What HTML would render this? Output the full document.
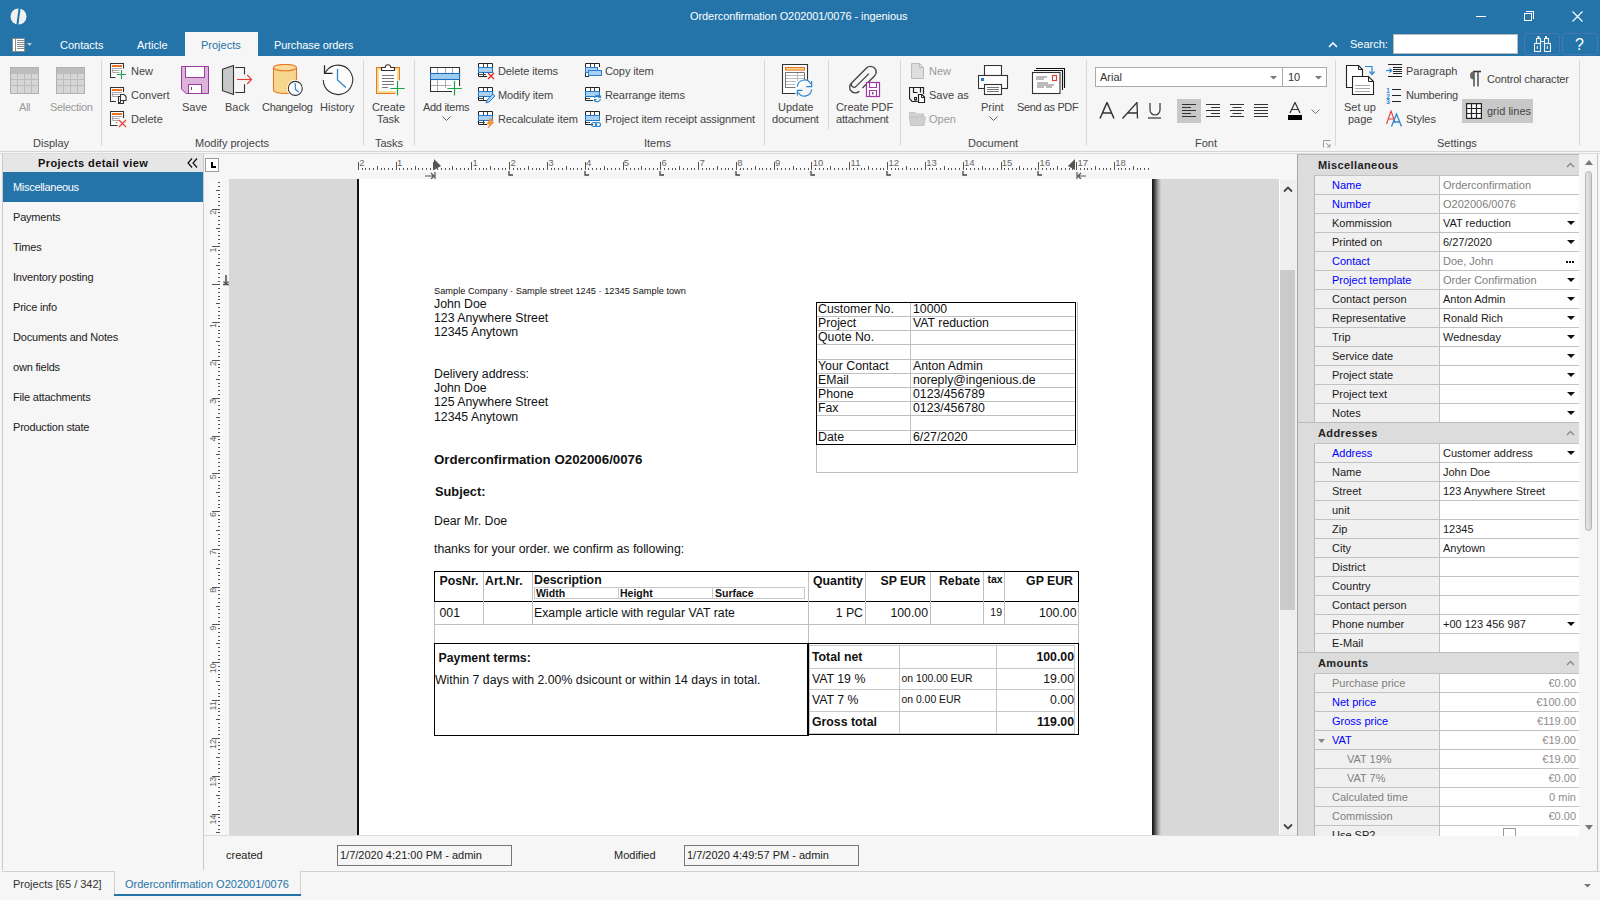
<!DOCTYPE html>
<html><head><meta charset="utf-8">
<style>
*{margin:0;padding:0;box-sizing:border-box}
html,body{width:1600px;height:900px;overflow:hidden;background:#f6f6f6;font-family:"Liberation Sans",sans-serif;font-size:11px;color:#222;position:relative}
.a{position:absolute;white-space:nowrap;line-height:1}
#title{left:0;top:0;width:1600px;height:56px;background:#2474a9}
.tt{color:#fff}
#ribbon{left:0;top:56px;width:1600px;height:95px;background:#f6f6f6}
.lbl{color:#444}
.sep{width:1px;background:#d9d9d9}
.gl{color:#444;font-size:11px}
.li{color:#222}
</style></head><body>
<div id="title" class="a">
  <svg class="a" style="left:10px;top:8px" width="17" height="17" viewBox="0 0 17 17"><circle cx="8.5" cy="8.5" r="8" fill="#f0f0f0"/><path d="M8.6 0 L10.6 0.3 L8.4 17 L6.4 16.7Z" fill="#2474a9"/></svg>
  <div class="a tt" style="left:690px;top:11px;font-size:11px;letter-spacing:-0.08px">Orderconfirmation O202001/0076 - ingenious</div>
  <div class="a" style="left:1476px;top:16px;width:10px;height:1px;background:#fff"></div>
  <div class="a" style="left:1526px;top:11px;width:8px;height:8px;border:1px solid #fff;border-bottom:none;border-left:none"></div>
  <div class="a" style="left:1524px;top:13px;width:8px;height:8px;border:1px solid #fff"></div>
  <svg class="a" style="left:1572px;top:11px" width="11" height="11" viewBox="0 0 11 11"><path d="M0.5 0.5L10.5 10.5M10.5 0.5L0.5 10.5" stroke="#fff" stroke-width="1.1"/></svg>
  <!-- menu icon -->
  <div class="a" style="left:12px;top:38px;width:13px;height:14px;border:1px solid #8a8a8a;background:#fff"></div>
  <div class="a" style="left:15px;top:39px;width:1px;height:12px;background:#8a8a8a"></div>
  <div class="a" style="left:17px;top:40px;width:7px;height:10px;background:repeating-linear-gradient(#8a8a8a 0 1px,#fff 1px 2px)"></div>
  <svg class="a" style="left:27px;top:43px" width="5" height="3"><path d="M0 0H5L2.5 3Z" fill="#c8c8c8"/></svg>
  <div class="a tt" style="left:60px;top:40px;font-size:11px">Contacts</div>
  <div class="a tt" style="left:137px;top:40px;font-size:11px">Article</div>
  <div class="a" style="left:185px;top:32px;width:73px;height:24px;background:#f6f6f6"></div>
  <div class="a" style="left:201px;top:40px;font-size:11px;color:#2474a9">Projects</div>
  <div class="a tt" style="left:274px;top:40px;font-size:11px;letter-spacing:-0.1px">Purchase orders</div>
  <svg class="a" style="left:1328px;top:41px" width="10" height="7"><path d="M1 6L5 2L9 6" stroke="#fff" stroke-width="1.6" fill="none"/></svg>
  <div class="a tt" style="left:1350px;top:39px;font-size:11px">Search:</div>
  <div class="a" style="left:1393px;top:34px;width:125px;height:20px;background:#fff;border:1px solid #b9b9b9"></div>
  <div class="a" style="left:1524px;top:33px;width:36px;height:22px;border:1px solid #4878b4;border-radius:3px"></div>
  <div class="a" style="left:1562px;top:33px;width:36px;height:22px;border:1px solid #4878b4;border-radius:3px"></div>
  <svg class="a" style="left:1534px;top:35px" width="17" height="18" viewBox="0 0 17 18"><g fill="none" stroke="#f4f0ea" stroke-width="1.1"><rect x="0.5" y="8.5" width="6" height="8"/><rect x="10.5" y="8.5" width="6" height="8"/><rect x="2.5" y="3.5" width="4" height="5"/><rect x="10.5" y="3.5" width="4" height="5"/><path d="M6 6.5H10.5M3.3 11V14M13.3 11V14"/></g><rect x="3.5" y="1" width="2" height="2" fill="#f4f0ea"/><rect x="11" y="1" width="2" height="2" fill="#f4f0ea"/></svg>
  <div class="a tt" style="left:1575px;top:37px;font-size:16px">?</div>
</div>

<div id="ribbon" class="a">
  <!-- separators -->
  <div class="a sep" style="left:101px;top:4px;height:86px"></div>
  <div class="a sep" style="left:363px;top:4px;height:86px"></div>
  <div class="a sep" style="left:414px;top:4px;height:86px"></div>
  <div class="a sep" style="left:764px;top:4px;height:86px"></div>
  <div class="a sep" style="left:828px;top:4px;height:70px"></div>
  <div class="a sep" style="left:900px;top:4px;height:86px"></div>
  <div class="a sep" style="left:1086px;top:4px;height:86px"></div>
  <div class="a sep" style="left:1335px;top:4px;height:86px"></div>
  <div class="a sep" style="left:1579px;top:4px;height:86px"></div>
  <!-- group labels -->
  <div class="a gl" style="left:33px;top:82px">Display</div>
  <div class="a gl" style="left:195px;top:82px">Modify projects</div>
  <div class="a gl" style="left:375px;top:82px">Tasks</div>
  <div class="a gl" style="left:644px;top:82px">Items</div>
  <div class="a gl" style="left:968px;top:82px">Document</div>
  <div class="a gl" style="left:1195px;top:82px">Font</div>
  <div class="a gl" style="left:1437px;top:82px">Settings</div>
  <svg class="a" style="left:1323px;top:84px" width="8" height="8"><path d="M0.5 7.5V0.5H7.5" stroke="#999" fill="none"/><path d="M3 3L7 7M7 4V7H4" stroke="#999" fill="none"/></svg>

  <!-- Display: All / Selection -->
  <svg class="a" style="left:10px;top:11px" width="29" height="27" viewBox="0 0 29 27"><rect x="0.5" y="0.5" width="28" height="26" fill="#d6d6d6" stroke="#b0b0b0"/><rect x="1" y="1" width="27" height="5" fill="#bdbdbd"/><path d="M1 6.5H28M1 12.5H28M1 18.5H28M7.5 6V26M14.5 6V26M21.5 6V26" stroke="#bcbcbc"/></svg>
  <svg class="a" style="left:56px;top:11px" width="29" height="27" viewBox="0 0 29 27"><rect x="0.5" y="0.5" width="28" height="26" fill="#d6d6d6" stroke="#b0b0b0"/><rect x="1" y="1" width="27" height="5" fill="#bdbdbd"/><path d="M1 6.5H28M1 12.5H28M1 18.5H28M7.5 6V26M14.5 6V26M21.5 6V26" stroke="#bcbcbc"/></svg>
  <div class="a lbl" style="left:19px;top:46px;color:#9a9a9a;font-size:11px;letter-spacing:-0.4px">All</div>
  <div class="a lbl" style="left:50px;top:46px;color:#9a9a9a;font-size:11px;letter-spacing:-0.3px">Selection</div>

  <!-- New / Convert / Delete -->
  <svg class="a" style="left:110px;top:7px" width="17" height="17" viewBox="0 0 17 17"><path d="M5.5 14.5H0.5V0.5H13.5V5.5" fill="#fff" stroke="#333" stroke-width="1.1"/><rect x="2" y="2" width="10" height="2" fill="#e8762a"/><path d="M2.5 5.5H12M2.5 5.5V9.5H9.5M2.5 7.5H9.5" fill="none" stroke="#aaa"/><path d="M11.5 7V16M7 11.5H16" stroke="#1aa34a" stroke-width="1.1"/></svg>
  <svg class="a" style="left:110px;top:31px" width="17" height="17" viewBox="0 0 17 17"><path d="M6 14.5H0.5V0.5H13.5V5" fill="#fff" stroke="#333" stroke-width="1.1"/><rect x="2" y="2" width="10" height="2" fill="#e8762a"/><path d="M2.5 5.5H12M2.5 5.5V9.5H9.5M2.5 7.5H9.5" fill="none" stroke="#aaa"/><path d="M8.5 9.5H10.5V15.5H8.5Z" fill="#fff" stroke="#333"/><path d="M10.5 7.5H14L16 9.5V13.5H10.5Z" fill="#fff" stroke="#333" stroke-width="1.1"/><path d="M8.5 9.5V16.5H13.5V13.5" fill="none" stroke="#333" stroke-width="1.1"/></svg>
  <svg class="a" style="left:110px;top:55px" width="17" height="17" viewBox="0 0 17 17"><path d="M7.5 14.5H0.5V0.5H13.5V7" fill="#fff" stroke="#333" stroke-width="1.1"/><rect x="2" y="2" width="10" height="2" fill="#e8762a"/><path d="M2.5 5.5H12M2.5 5.5V9.5H9.5M2.5 7.5H9.5" fill="none" stroke="#aaa"/><rect x="6" y="11" width="1.2" height="1.2" fill="#e8762a"/><path d="M9 9L16 16M16 9L9 16" stroke="#e53935" stroke-width="1.1"/></svg>
  <div class="a lbl" style="left:131px;top:10px;font-size:11px">New</div>
  <div class="a lbl" style="left:131px;top:34px;font-size:11px">Convert</div>
  <div class="a lbl" style="left:131px;top:58px;font-size:11px">Delete</div>

  <!-- Save -->
  <svg class="a" style="left:181px;top:10px" width="28" height="28" viewBox="0 0 28 28"><path d="M0.5 0.5H27.5V27.5H5L0.5 23Z" fill="#dcb3d9" stroke="#9b3aa3"/><rect x="4.5" y="0.5" width="19" height="11" fill="#fff" stroke="#9b3aa3"/><rect x="7.5" y="18.5" width="13" height="9" fill="#fff" stroke="#9b3aa3"/><path d="M10.5 21v3" stroke="#555"/></svg>
  <div class="a lbl" style="left:182px;top:46px;font-size:11px">Save</div>
  <!-- Back -->
  <svg class="a" style="left:221px;top:9px" width="32" height="31" viewBox="0 0 32 31"><path d="M1.5 4.3L12.5 0.5V29.5L1.5 25.7Z" fill="#c8c8c8" stroke="#333" stroke-width="1.1" stroke-linejoin="miter"/><path d="M14.2 2.5H23.5V9.4M23.5 19.2V27.5H14.2" fill="none" stroke="#333" stroke-width="1.1"/><path d="M16 14.5H30.5" stroke="#e53935" stroke-width="1.1"/><path d="M26.2 10L30.6 14.5L26.2 19" fill="none" stroke="#e53935" stroke-width="1.1"/></svg>
  <div class="a lbl" style="left:225px;top:46px;font-size:11px">Back</div>
  <!-- Changelog -->
  <svg class="a" style="left:272px;top:8px" width="33" height="33" viewBox="0 0 33 33"><path d="M1.5 3.6V26.2A11.5 3.3 0 0 0 24.5 26.2V3.6" fill="#f6d58c" stroke="#e8762a" stroke-width="1.1"/><ellipse cx="13" cy="3.6" rx="11.5" ry="3.2" fill="#f8dc9c" stroke="#e8762a" stroke-width="1.1"/><circle cx="23.3" cy="24.4" r="7.6" fill="#fff" stroke="#fff" stroke-width="1.5"/><circle cx="23.3" cy="24.4" r="7" fill="#fff" stroke="#333" stroke-width="1.1"/><path d="M23.3 19.3V25.2L26.8 28.2" fill="none" stroke="#2a85d0" stroke-width="1.2"/></svg>
  <div class="a lbl" style="left:262px;top:46px;font-size:11px;letter-spacing:-0.3px">Changelog</div>
  <!-- History -->
  <svg class="a" style="left:322px;top:8px" width="33" height="33" viewBox="0 0 33 33"><path d="M1.3 16A14.7 14.7 0 1 0 4.2 7.1L2.5 9.3" fill="#fdfdfd" stroke="#333" stroke-width="1.1"/><path d="M2.5 1.3V9.3H10.5" fill="none" stroke="#222" stroke-width="1.2"/><path d="M15.5 5V16L23.8 23.6" fill="none" stroke="#2a85d0" stroke-width="1.3"/></svg>
  <div class="a lbl" style="left:320px;top:46px;font-size:11px">History</div>

  <!-- Create Task -->
  <svg class="a" style="left:375px;top:8px" width="31" height="33" viewBox="0 0 31 33"><rect x="1.5" y="3.5" width="23" height="26" fill="#f6dc8c" stroke="#e8762a" stroke-width="1"/><rect x="4" y="6" width="18" height="21" fill="#fff"/><rect x="20.5" y="16.2" width="9" height="16" fill="#f6f6f6"/><rect x="20" y="16" width="2" height="11" fill="#fff"/><path d="M6.5 6.5V3.5H10.2A2.8 2.8 0 0 1 15.8 3.5H19.5V6.5Z" fill="#fff" stroke="#333" stroke-width="1.1"/><path d="M7 11.5H19M7 14.5H19M7 17.5H19M7 20.5H19M7 23.5H13" stroke="#777"/><path d="M22.5 17V31.5M15.3 24.5H29.7" stroke="#1aa34a" stroke-width="1.2"/></svg>
  <div class="a lbl" style="left:372px;top:46px;font-size:11px">Create</div>
  <div class="a lbl" style="left:377px;top:58px;font-size:11px">Task</div>
  <!-- Add items -->
  <svg class="a" style="left:430px;top:10px" width="33" height="31" viewBox="0 0 33 31"><path d="M22 25.5H0.5V1.5H29.5V20" fill="#fff" stroke="#333" stroke-width="1.1"/><path d="M7.5 2V7M15.5 2V7M22.5 2V7M7.5 14V25M15.5 14V22M1 19.5H21" stroke="#aaa"/><rect x="0.5" y="7.5" width="29" height="6" fill="#9fcdf0" stroke="#1e6fc0" stroke-width="1.1"/><rect x="17" y="14.2" width="12" height="5" fill="#fff"/><path d="M24.5 15V29.5M17.3 22.5H31.7" stroke="#1aa34a" stroke-width="1.2"/></svg>
  <div class="a lbl" style="left:423px;top:46px;font-size:11px;letter-spacing:-0.3px">Add items</div>
  <svg class="a" style="left:442px;top:60px" width="9" height="5"><path d="M0.5 0.5L4.5 4.5L8.5 0.5" stroke="#666" fill="none"/></svg>

  <!-- Items small -->
  <svg class="a" style="left:478px;top:7px" width="17" height="17" viewBox="0 0 17 17"><path d="M9 13.5H0.5V0.5H14.5V8" fill="#fff" stroke="#222"/><rect x="0.5" y="4.5" width="14" height="5" fill="#a9d1f3" stroke="#1e78cc"/><path d="M5.5 1V4M9.5 1V4M5.5 9V13M1 11.5H8" stroke="#444"/><path d="M10 10L16 16M16 10L10 16" stroke="#e02020" stroke-width="1.2"/></svg>
  <svg class="a" style="left:478px;top:31px" width="17" height="17" viewBox="0 0 17 17"><path d="M9 13.5H0.5V0.5H14.5V6" fill="#fff" stroke="#222"/><rect x="0.5" y="4.5" width="14" height="5" fill="#a9d1f3" stroke="#1e78cc"/><path d="M5.5 1V4M9.5 1V4M5.5 9V13M1 11.5H6" stroke="#444"/><path d="M8 16L9 13L15 7L17 9L11 15Z" fill="#a9d1f3" stroke="#2a7fd0"/></svg>
  <svg class="a" style="left:478px;top:55px" width="17" height="17" viewBox="0 0 17 17"><path d="M9 13.5H0.5V0.5H14.5V7" fill="#fff" stroke="#222"/><rect x="0.5" y="4.5" width="14" height="5" fill="#a9d1f3" stroke="#1e78cc"/><path d="M5.5 1V4M9.5 1V4M5.5 9V13M1 11.5H7" stroke="#444"/><path d="M12 8L9 13H12L10 17L16 11H13L15 8Z" fill="#f39a3a" stroke="#e07b22" stroke-width="0.6"/></svg>
  <div class="a lbl" style="left:498px;top:10px;font-size:11px;letter-spacing:-0.1px">Delete items</div>
  <div class="a lbl" style="left:498px;top:34px;font-size:11px;letter-spacing:-0.1px">Modify item</div>
  <div class="a lbl" style="left:498px;top:58px;font-size:11px;letter-spacing:-0.1px">Recalculate item</div>
  <svg class="a" style="left:585px;top:7px" width="17" height="17" viewBox="0 0 17 17"><path d="M0.5 13.5V0.5H14.5V4" fill="#fff" stroke="#222"/><path d="M5.5 1V4M9.5 1V4" stroke="#444"/><rect x="0.5" y="4.5" width="12" height="5" fill="#a9d1f3" stroke="#2a7fd0"/><rect x="3.5" y="7.5" width="13" height="5" fill="#a9d1f3" stroke="#2a7fd0"/><path d="M0.5 13.5H4" stroke="#222"/></svg>
  <svg class="a" style="left:585px;top:31px" width="17" height="17" viewBox="0 0 17 17"><path d="M8 13.5H0.5V0.5H14.5V6" fill="#fff" stroke="#222"/><rect x="0.5" y="4.5" width="14" height="5" fill="#a9d1f3" stroke="#1e78cc"/><path d="M5.5 1V4M9.5 1V4M1 11.5H5" stroke="#444"/><path d="M9.5 11A3.2 3.2 0 0 1 15.5 10M15.5 12A3.2 3.2 0 0 1 9.5 13M15.5 8.5V10.5H13.5M9.5 14.5V12.5H11.5" stroke="#2a85d0" stroke-width="1.2" fill="none"/></svg>
  <svg class="a" style="left:585px;top:55px" width="17" height="17" viewBox="0 0 17 17"><path d="M8 13.5H0.5V0.5H14.5V8" fill="#fff" stroke="#222"/><rect x="0.5" y="4.5" width="14" height="5" fill="#a9d1f3" stroke="#1e78cc"/><path d="M5.5 1V4M9.5 1V4M1 11.5H5" stroke="#444"/><rect x="6.5" y="11.5" width="5" height="4" rx="2" fill="none" stroke="#2a85d0" stroke-width="1.2"/><rect x="10.5" y="11.5" width="5" height="4" rx="2" fill="none" stroke="#2a85d0" stroke-width="1.2"/></svg>
  <div class="a lbl" style="left:605px;top:10px;font-size:11px;letter-spacing:-0.1px">Copy item</div>
  <div class="a lbl" style="left:605px;top:34px;font-size:11px;letter-spacing:-0.1px">Rearrange items</div>
  <div class="a lbl" style="left:605px;top:58px;font-size:11px;letter-spacing:-0.11px">Project item receipt assignment</div>

  <!-- Update document -->
  <svg class="a" style="left:781px;top:7px" width="34" height="35" viewBox="0 0 34 35"><path d="M14.5 30.5H1.5V1.5H26.5V16.8" fill="#fff" stroke="#333" stroke-width="1.1"/><rect x="4.5" y="4.5" width="19" height="2.6" fill="#f8d98a" stroke="#e8762a" stroke-width="1"/><path d="M14.5 24.5H4.5V9.5H23.5V16.5" fill="none" stroke="#777"/><path d="M5 12.5H23M5 15.5H23M5 18.5H15M5 21.5H14M16.5 10V18" stroke="#bbb"/><path d="M16.4 23.8A7 7 0 0 1 29.6 20.8" fill="none" stroke="#2a85d0" stroke-width="1.2"/><path d="M30.6 18V23.7H25.3" fill="none" stroke="#2a85d0" stroke-width="1.2"/><path d="M30.5 26.5A7 7 0 0 1 17.4 29.5" fill="none" stroke="#2a85d0" stroke-width="1.2"/><path d="M16.4 32.6V27.3H21.5" fill="none" stroke="#2a85d0" stroke-width="1.2"/></svg>
  <div class="a lbl" style="left:778px;top:46px;font-size:11px">Update</div>
  <div class="a lbl" style="left:772px;top:58px;font-size:11px;letter-spacing:-0.2px">document</div>
  <!-- Create PDF attachment -->
  <svg class="a" style="left:848px;top:7px" width="34" height="35" viewBox="0 0 34 35"><g transform="translate(14.5 17) rotate(45) scale(1.13) translate(-5 -16)"><path d="M10 21V6A5 5 0 0 0 0 6V25A5 5 0 0 0 10 25M5 8V24A2.5 2.5 0 0 1 0 24" fill="none" stroke="#444" stroke-width="1.2"/></g><rect x="18.5" y="19.5" width="13" height="14" fill="#fff" stroke="#9b3aa3" stroke-width="1.2"/><path d="M21.5 20V24.5H28.5V20" fill="none" stroke="#9b3aa3" stroke-width="1.1"/><path d="M21.5 33V27.5H28.5V33" fill="none" stroke="#9b3aa3" stroke-width="1.1"/><rect x="24" y="29" width="1.5" height="2.5" fill="#9b3aa3"/></svg>
  <div class="a lbl" style="left:836px;top:46px;font-size:11px;letter-spacing:-0.1px">Create PDF</div>
  <div class="a lbl" style="left:836px;top:58px;font-size:11px;letter-spacing:-0.2px">attachment</div>

  <!-- Document small -->
  <svg class="a" style="left:910px;top:6px" width="15" height="18" viewBox="0 0 15 18"><path d="M1.5 1.5H9.5L13.5 5.5V16.5H1.5Z" fill="#ddd" stroke="#bbb"/><path d="M9.5 1.5V5.5H13.5" fill="none" stroke="#bbb"/></svg>
  <svg class="a" style="left:909px;top:31px" width="17" height="17" viewBox="0 0 17 17"><path d="M14.5 7V0.5H0.5V11.5L3 14.5H8.5" fill="none" stroke="#222" stroke-width="1.2"/><path d="M4.5 0.5V5.5H8.5M11.5 0.5V5.5" fill="none" stroke="#222" stroke-width="1.2"/><rect x="5.5" y="10.5" width="2" height="2.5" fill="none" stroke="#222"/><path d="M9.5 7.5H13L15.5 10V15.5H9.5Z" fill="#fff" stroke="#222" stroke-width="1.2"/><path d="M12.5 7.5V10.5H15.5" fill="none" stroke="#222"/></svg>
  <svg class="a" style="left:909px;top:55px" width="17" height="15" viewBox="0 0 17 15"><path d="M0.5 1.5H6L7.5 3H14.5V6H0.5Z" fill="#d2d2d2" stroke="#c4c4c4"/><path d="M0.5 6H16.5L15 14.5H1.5Z" fill="#cfcfcf" stroke="#c4c4c4"/></svg>
  <div class="a lbl" style="left:929px;top:10px;font-size:11px;color:#9a9a9a">New</div>
  <div class="a lbl" style="left:929px;top:34px;font-size:11px">Save as</div>
  <div class="a lbl" style="left:929px;top:58px;font-size:11px;color:#9a9a9a">Open</div>
  <!-- Print -->
  <svg class="a" style="left:978px;top:9px" width="31" height="31" viewBox="0 0 31 31"><rect x="6.5" y="0.5" width="17" height="10" fill="#fff" stroke="#333" stroke-width="1.1"/><rect x="0.5" y="10.5" width="29" height="13" fill="#fff" stroke="#333" stroke-width="1.1"/><rect x="3" y="13" width="3" height="3" fill="#1e7ad0"/><rect x="6.5" y="19.5" width="17" height="10" fill="#fff" stroke="#333" stroke-width="1.1"/><path d="M9 22.5H21M9 24.5H21M9 26.5H21" stroke="#777"/></svg>
  <div class="a lbl" style="left:981px;top:46px;font-size:11px">Print</div>
  <svg class="a" style="left:989px;top:60px" width="9" height="5"><path d="M0.5 0.5L4.5 4.5L8.5 0.5" stroke="#666" fill="none"/></svg>
  <!-- Send as PDF -->
  <svg class="a" style="left:1031px;top:11px" width="35" height="28" viewBox="0 0 35 28"><path d="M5 1.5H33.5V21" fill="none" stroke="#111" stroke-width="1.1"/><path d="M3 3.5H31.5V23" fill="none" stroke="#111" stroke-width="1.1"/><rect x="1.5" y="5.5" width="27.5" height="21" fill="#fff" stroke="#333" stroke-width="1.1"/><rect x="21.5" y="8.5" width="4" height="5" fill="none" stroke="#e53935" stroke-width="1.1"/><path d="M5 10H16M5 12H13M6 16H17M6 18H23M6 20H13M15 20H21" stroke="#666" stroke-width="0.9"/></svg>
  <div class="a lbl" style="left:1017px;top:46px;font-size:11px;letter-spacing:-0.38px">Send as PDF</div>

  <!-- Font -->
  <div class="a" style="left:1095px;top:11px;width:232px;height:20px;background:#fff;border:1px solid #aaa"></div>
  <div class="a" style="left:1282px;top:12px;width:1px;height:18px;background:#aaa"></div>
  <div class="a lbl" style="left:1100px;top:16px;font-size:11px;color:#333">Arial</div>
  <div class="a lbl" style="left:1288px;top:16px;font-size:11px;color:#333">10</div>
  <svg class="a" style="left:1270px;top:20px" width="7" height="4"><path d="M0 0H7L3.5 3.5Z" fill="#777"/></svg>
  <svg class="a" style="left:1315px;top:20px" width="7" height="4"><path d="M0 0H7L3.5 3.5Z" fill="#777"/></svg>
  <svg class="a" style="left:1099px;top:46px" width="16" height="17" viewBox="0 0 16 17"><path d="M1 16.5L8 0.5L15 16.5M3.5 11H12.5" fill="none" stroke="#333" stroke-width="1.5"/></svg>
  <svg class="a" style="left:1122px;top:46px" width="18" height="17" viewBox="0 0 18 17"><path d="M0.5 16.5L15 0.5L15.5 16.5M5 11H15" fill="none" stroke="#333" stroke-width="1.3"/></svg>
  <svg class="a" style="left:1148px;top:47px" width="14" height="16" viewBox="0 0 14 16"><path d="M2 0V7A5 5 0 0 0 12 7V0" fill="none" stroke="#333" stroke-width="1.2"/><path d="M0 15H13" stroke="#333" stroke-width="1.2"/></svg>
  <div class="a" style="left:1177px;top:43px;width:24px;height:24px;background:#c8c8c8"></div>
  <svg class="a" style="left:1181px;top:47px" width="16" height="16" viewBox="0 0 16 16"><path d="M1 1.5H15M1 4.5H10M1 7.5H15M1 10.5H10M1 13.5H15" stroke="#333" stroke-width="1.2"/></svg>
  <svg class="a" style="left:1205px;top:47px" width="16" height="16" viewBox="0 0 16 16"><path d="M1 1.5H15M6 4.5H15M1 7.5H15M6 10.5H15M1 13.5H15" stroke="#333" stroke-width="1.2"/></svg>
  <svg class="a" style="left:1229px;top:47px" width="16" height="16" viewBox="0 0 16 16"><path d="M1 1.5H15M3.5 4.5H12.5M1 7.5H15M3.5 10.5H12.5M1 13.5H15" stroke="#333" stroke-width="1.2"/></svg>
  <svg class="a" style="left:1253px;top:47px" width="16" height="16" viewBox="0 0 16 16"><path d="M1 1.5H15M1 4.5H15M1 7.5H15M1 10.5H15M1 13.5H15" stroke="#333" stroke-width="1.2"/></svg>
  <svg class="a" style="left:1287px;top:46px" width="16" height="18" viewBox="0 0 16 18"><path d="M3 11L8 0.5L13 11M4.5 7.5H11.5" fill="none" stroke="#333" stroke-width="1.2"/><rect x="1" y="13" width="14" height="5" fill="#000"/></svg>
  <svg class="a" style="left:1311px;top:53px" width="9" height="5"><path d="M0.5 0.5L4.5 4.5L8.5 0.5" stroke="#777" fill="none"/></svg>

  <!-- Settings -->
  <svg class="a" style="left:1345px;top:9px" width="32" height="32" viewBox="0 0 32 32"><path d="M1.5 0.5H13.5L17.5 4.5V22.5H1.5Z" fill="#fff" stroke="#222" stroke-width="1.1"/><path d="M13.5 0.5V4.5H17.5" fill="none" stroke="#222"/><path d="M7.5 11.5H23.5L28.5 16.5V29.5H7.5Z" fill="#fff" stroke="#222" stroke-width="1.1"/><path d="M23.5 11.5V16.5H28.5" fill="none" stroke="#222"/><path d="M10 20.5H25M10 23.5H25M10 26.5H25" stroke="#aaa"/><path d="M20 1.5H27V9" fill="none" stroke="#2a85d0" stroke-width="1.2"/><path d="M24.5 6.5L27 9.5L29.5 6.5" fill="none" stroke="#2a85d0" stroke-width="1.2"/></svg>
  <div class="a lbl" style="left:1344px;top:46px;font-size:11px">Set up</div>
  <div class="a lbl" style="left:1348px;top:58px;font-size:11px">page</div>
  <svg class="a" style="left:1386px;top:7px" width="17" height="16" viewBox="0 0 17 16"><path d="M2 1.5H16M7 4.5H16M7 6.5H16M7 8.5H16M7 10.5H16M2 13.5H16" stroke="#222" stroke-width="1"/><path d="M0 7.5H5.5" stroke="#2a85d0" stroke-width="1.1"/><path d="M3.5 5.5L5.8 7.5L3.5 9.5" fill="none" stroke="#2a85d0" stroke-width="1.1"/></svg>
  <svg class="a" style="left:1386px;top:31px" width="17" height="17" viewBox="0 0 17 17"><path d="M6 2.5H15M6 8.5H15M6 14.5H15" stroke="#222" stroke-width="1"/><text x="0.3" y="6" font-size="6.5" font-weight="bold" fill="#2a85d0" font-family="Liberation Sans">1</text><text x="0.3" y="11.5" font-size="6.5" font-weight="bold" fill="#2a85d0" font-family="Liberation Sans">2</text><text x="0.3" y="17" font-size="6.5" font-weight="bold" fill="#2a85d0" font-family="Liberation Sans">3</text></svg>
  <svg class="a" style="left:1386px;top:54px" width="17" height="17" viewBox="0 0 17 17"><path d="M0.5 14L5 1L9 12M2 9H7" fill="none" stroke="#e53935" stroke-width="1.1"/><path d="M5.5 16.5L10.5 4L15.5 16.5M7.5 12H13.5" fill="none" stroke="#2a85d0" stroke-width="1.3"/></svg>
  <div class="a lbl" style="left:1406px;top:10px;font-size:11px">Paragraph</div>
  <div class="a lbl" style="left:1406px;top:34px;font-size:11px;letter-spacing:-0.2px">Numbering</div>
  <div class="a lbl" style="left:1406px;top:58px;font-size:11px">Styles</div>
  <svg class="a" style="left:1467px;top:14px" width="15" height="17" viewBox="0 0 15 17"><path d="M6 1.5H14M7 1.5V16.5M11 1.5V16.5" stroke="#333" stroke-width="1.3" fill="none"/><path d="M7 1.5A4 4 0 0 0 7 9.5Z" fill="#666"/></svg>
  <div class="a lbl" style="left:1487px;top:18px;font-size:11px;letter-spacing:-0.15px">Control character</div>
  <div class="a" style="left:1462px;top:43px;width:71px;height:24px;background:#c8c8c8"></div>
  <svg class="a" style="left:1466px;top:47px" width="16" height="16" viewBox="0 0 16 16"><path d="M0.6 0.6H15.4V15.4H0.6ZM5.5 0.6V15.4M10.5 0.6V15.4M0.6 5.5H15.4M0.6 10.5H15.4" fill="#fff" stroke="#222" stroke-width="1.2"/></svg>
  <div class="a lbl" style="left:1487px;top:50px;font-size:11px">grid lines</div>
</div>
<div class="a" style="left:0;top:151px;width:1600px;height:1px;background:#d5d5d5"></div>
<div class="a" style="left:0;top:153px;width:1600px;height:1px;background:#dcdcdc"></div>

<div class="a" style="left:2px;top:154px;width:202px;height:716px;background:#f6f6f6;border-left:1px solid #c9c9c9;border-right:1px solid #c9c9c9"></div>
<div class="a" style="left:3px;top:154px;width:200px;height:18px;background:#e6e6e6"></div>
<div class="a" style="left:38px;top:158px;font-size:11px;font-weight:bold;color:#111;letter-spacing:0.4px">Projects detail view</div>
<svg class="a" style="left:187px;top:158px" width="11" height="10" viewBox="0 0 11 10"><path d="M5 0.5L1 5L5 9.5M10 0.5L6 5L10 9.5" fill="none" stroke="#111" stroke-width="1.2"/></svg>
<div class="a" style="left:3px;top:172px;width:200px;height:30px;background:#2474a9"></div>
<div class="a" style="left:13px;top:182px;font-size:11px;color:#fff;letter-spacing:-0.3px">Miscellaneous</div>
<div class="a li" style="left:13px;top:212px;font-size:11px;letter-spacing:-0.2px">Payments</div>
<div class="a li" style="left:13px;top:242px;font-size:11px;letter-spacing:-0.2px">Times</div>
<div class="a li" style="left:13px;top:272px;font-size:11px;letter-spacing:-0.2px">Inventory posting</div>
<div class="a li" style="left:13px;top:302px;font-size:11px;letter-spacing:-0.2px">Price info</div>
<div class="a li" style="left:13px;top:332px;font-size:11px;letter-spacing:-0.2px">Documents and Notes</div>
<div class="a li" style="left:13px;top:362px;font-size:11px;letter-spacing:-0.2px">own fields</div>
<div class="a li" style="left:13px;top:392px;font-size:11px;letter-spacing:-0.2px">File attachments</div>
<div class="a li" style="left:13px;top:422px;font-size:11px;letter-spacing:-0.2px">Production state</div>

<!-- bottom tabs -->

<div class="a" style="left:0;top:870px;width:1600px;height:30px;background:#f6f6f6"></div>
<div class="a" style="left:2px;top:871px;width:112px;height:1px;background:#d0d0d0"></div><div class="a" style="left:300px;top:871px;width:1300px;height:1px;background:#d0d0d0"></div>
<div class="a" style="left:13px;top:879px;font-size:11px;color:#333">Projects [65 / 342]</div>
<div class="a" style="left:114px;top:871px;width:187px;height:24px;border-left:1px solid #d0d0d0;border-right:1px solid #d0d0d0"></div>
<div class="a" style="left:114px;top:894px;width:187px;height:2px;background:#2474a9"></div>
<div class="a" style="left:125px;top:879px;font-size:11px;color:#2474a9">Orderconfirmation O202001/0076</div>
<svg class="a" style="left:1584px;top:884px" width="7" height="4"><path d="M0 0H7L3.5 3.5Z" fill="#777"/></svg>

<!-- created / modified -->
<div class="a" style="left:204px;top:836px;width:1094px;height:34px;background:#f6f6f6"></div>
<div class="a" style="left:226px;top:850px;font-size:11px;color:#222">created</div>
<div class="a" style="left:337px;top:845px;width:175px;height:21px;border:1px solid #777;background:#f6f6f6"></div>
<div class="a" style="left:340px;top:850px;font-size:11px;color:#222">1/7/2020 4:21:00 PM - admin</div>
<div class="a" style="left:614px;top:850px;font-size:11px;color:#222">Modified</div>
<div class="a" style="left:684px;top:845px;width:175px;height:21px;border:1px solid #777;background:#f6f6f6"></div>
<div class="a" style="left:687px;top:850px;font-size:11px;color:#222">1/7/2020 4:49:57 PM - admin</div>

<div class="a" style="left:204px;top:154px;width:1093px;height:26px;background:#f6f6f6"></div>
<div class="a" style="left:205px;top:158px;width:14px;height:14px;border:1px solid #9a9a9a;background:#fff"></div>
<div class="a" style="left:211px;top:162px;width:2px;height:6px;background:#000"></div><div class="a" style="left:211px;top:166px;width:5px;height:2px;background:#000"></div>
<div class="a" style="left:358px;top:158px;width:793px;height:14px;background:#fafafa"></div>
<svg class="a" style="left:0;top:154px" width="1200" height="26"><rect x="358" y="8" width="1" height="8" fill="#555"/><rect x="362" y="14" width="1" height="2" fill="#555"/><rect x="365" y="14" width="1" height="2" fill="#555"/><rect x="369" y="14" width="1" height="2" fill="#555"/><rect x="373" y="14" width="1" height="2" fill="#555"/><rect x="377" y="12" width="1" height="4" fill="#555"/><rect x="381" y="14" width="1" height="2" fill="#555"/><rect x="384" y="14" width="1" height="2" fill="#555"/><rect x="388" y="14" width="1" height="2" fill="#555"/><rect x="392" y="14" width="1" height="2" fill="#555"/><rect x="396" y="8" width="1" height="8" fill="#555"/><rect x="399" y="14" width="1" height="2" fill="#555"/><rect x="403" y="14" width="1" height="2" fill="#555"/><rect x="407" y="14" width="1" height="2" fill="#555"/><rect x="411" y="14" width="1" height="2" fill="#555"/><rect x="415" y="12" width="1" height="4" fill="#555"/><rect x="418" y="14" width="1" height="2" fill="#555"/><rect x="422" y="14" width="1" height="2" fill="#555"/><rect x="426" y="14" width="1" height="2" fill="#555"/><rect x="430" y="14" width="1" height="2" fill="#555"/><rect x="433" y="8" width="1" height="8" fill="#555"/><rect x="437" y="14" width="1" height="2" fill="#555"/><rect x="441" y="14" width="1" height="2" fill="#555"/><rect x="445" y="14" width="1" height="2" fill="#555"/><rect x="449" y="14" width="1" height="2" fill="#555"/><rect x="452" y="12" width="1" height="4" fill="#555"/><rect x="456" y="14" width="1" height="2" fill="#555"/><rect x="460" y="14" width="1" height="2" fill="#555"/><rect x="464" y="14" width="1" height="2" fill="#555"/><rect x="468" y="14" width="1" height="2" fill="#555"/><rect x="471" y="8" width="1" height="8" fill="#555"/><rect x="475" y="14" width="1" height="2" fill="#555"/><rect x="479" y="14" width="1" height="2" fill="#555"/><rect x="483" y="14" width="1" height="2" fill="#555"/><rect x="486" y="14" width="1" height="2" fill="#555"/><rect x="490" y="12" width="1" height="4" fill="#555"/><rect x="494" y="14" width="1" height="2" fill="#555"/><rect x="498" y="14" width="1" height="2" fill="#555"/><rect x="502" y="14" width="1" height="2" fill="#555"/><rect x="505" y="14" width="1" height="2" fill="#555"/><rect x="509" y="8" width="1" height="8" fill="#555"/><rect x="513" y="14" width="1" height="2" fill="#555"/><rect x="517" y="14" width="1" height="2" fill="#555"/><rect x="520" y="14" width="1" height="2" fill="#555"/><rect x="524" y="14" width="1" height="2" fill="#555"/><rect x="528" y="12" width="1" height="4" fill="#555"/><rect x="532" y="14" width="1" height="2" fill="#555"/><rect x="536" y="14" width="1" height="2" fill="#555"/><rect x="539" y="14" width="1" height="2" fill="#555"/><rect x="543" y="14" width="1" height="2" fill="#555"/><rect x="547" y="8" width="1" height="8" fill="#555"/><rect x="551" y="14" width="1" height="2" fill="#555"/><rect x="554" y="14" width="1" height="2" fill="#555"/><rect x="558" y="14" width="1" height="2" fill="#555"/><rect x="562" y="14" width="1" height="2" fill="#555"/><rect x="566" y="12" width="1" height="4" fill="#555"/><rect x="570" y="14" width="1" height="2" fill="#555"/><rect x="573" y="14" width="1" height="2" fill="#555"/><rect x="577" y="14" width="1" height="2" fill="#555"/><rect x="581" y="14" width="1" height="2" fill="#555"/><rect x="585" y="8" width="1" height="8" fill="#555"/><rect x="588" y="14" width="1" height="2" fill="#555"/><rect x="592" y="14" width="1" height="2" fill="#555"/><rect x="596" y="14" width="1" height="2" fill="#555"/><rect x="600" y="14" width="1" height="2" fill="#555"/><rect x="604" y="12" width="1" height="4" fill="#555"/><rect x="607" y="14" width="1" height="2" fill="#555"/><rect x="611" y="14" width="1" height="2" fill="#555"/><rect x="615" y="14" width="1" height="2" fill="#555"/><rect x="619" y="14" width="1" height="2" fill="#555"/><rect x="623" y="8" width="1" height="8" fill="#555"/><rect x="626" y="14" width="1" height="2" fill="#555"/><rect x="630" y="14" width="1" height="2" fill="#555"/><rect x="634" y="14" width="1" height="2" fill="#555"/><rect x="638" y="14" width="1" height="2" fill="#555"/><rect x="641" y="12" width="1" height="4" fill="#555"/><rect x="645" y="14" width="1" height="2" fill="#555"/><rect x="649" y="14" width="1" height="2" fill="#555"/><rect x="653" y="14" width="1" height="2" fill="#555"/><rect x="657" y="14" width="1" height="2" fill="#555"/><rect x="660" y="8" width="1" height="8" fill="#555"/><rect x="664" y="14" width="1" height="2" fill="#555"/><rect x="668" y="14" width="1" height="2" fill="#555"/><rect x="672" y="14" width="1" height="2" fill="#555"/><rect x="675" y="14" width="1" height="2" fill="#555"/><rect x="679" y="12" width="1" height="4" fill="#555"/><rect x="683" y="14" width="1" height="2" fill="#555"/><rect x="687" y="14" width="1" height="2" fill="#555"/><rect x="691" y="14" width="1" height="2" fill="#555"/><rect x="694" y="14" width="1" height="2" fill="#555"/><rect x="698" y="8" width="1" height="8" fill="#555"/><rect x="702" y="14" width="1" height="2" fill="#555"/><rect x="706" y="14" width="1" height="2" fill="#555"/><rect x="709" y="14" width="1" height="2" fill="#555"/><rect x="713" y="14" width="1" height="2" fill="#555"/><rect x="717" y="12" width="1" height="4" fill="#555"/><rect x="721" y="14" width="1" height="2" fill="#555"/><rect x="725" y="14" width="1" height="2" fill="#555"/><rect x="728" y="14" width="1" height="2" fill="#555"/><rect x="732" y="14" width="1" height="2" fill="#555"/><rect x="736" y="8" width="1" height="8" fill="#555"/><rect x="740" y="14" width="1" height="2" fill="#555"/><rect x="743" y="14" width="1" height="2" fill="#555"/><rect x="747" y="14" width="1" height="2" fill="#555"/><rect x="751" y="14" width="1" height="2" fill="#555"/><rect x="755" y="12" width="1" height="4" fill="#555"/><rect x="759" y="14" width="1" height="2" fill="#555"/><rect x="762" y="14" width="1" height="2" fill="#555"/><rect x="766" y="14" width="1" height="2" fill="#555"/><rect x="770" y="14" width="1" height="2" fill="#555"/><rect x="774" y="8" width="1" height="8" fill="#555"/><rect x="777" y="14" width="1" height="2" fill="#555"/><rect x="781" y="14" width="1" height="2" fill="#555"/><rect x="785" y="14" width="1" height="2" fill="#555"/><rect x="789" y="14" width="1" height="2" fill="#555"/><rect x="793" y="12" width="1" height="4" fill="#555"/><rect x="796" y="14" width="1" height="2" fill="#555"/><rect x="800" y="14" width="1" height="2" fill="#555"/><rect x="804" y="14" width="1" height="2" fill="#555"/><rect x="808" y="14" width="1" height="2" fill="#555"/><rect x="811" y="8" width="1" height="8" fill="#555"/><rect x="815" y="14" width="1" height="2" fill="#555"/><rect x="819" y="14" width="1" height="2" fill="#555"/><rect x="823" y="14" width="1" height="2" fill="#555"/><rect x="827" y="14" width="1" height="2" fill="#555"/><rect x="830" y="12" width="1" height="4" fill="#555"/><rect x="834" y="14" width="1" height="2" fill="#555"/><rect x="838" y="14" width="1" height="2" fill="#555"/><rect x="842" y="14" width="1" height="2" fill="#555"/><rect x="846" y="14" width="1" height="2" fill="#555"/><rect x="849" y="8" width="1" height="8" fill="#555"/><rect x="853" y="14" width="1" height="2" fill="#555"/><rect x="857" y="14" width="1" height="2" fill="#555"/><rect x="861" y="14" width="1" height="2" fill="#555"/><rect x="864" y="14" width="1" height="2" fill="#555"/><rect x="868" y="12" width="1" height="4" fill="#555"/><rect x="872" y="14" width="1" height="2" fill="#555"/><rect x="876" y="14" width="1" height="2" fill="#555"/><rect x="880" y="14" width="1" height="2" fill="#555"/><rect x="883" y="14" width="1" height="2" fill="#555"/><rect x="887" y="8" width="1" height="8" fill="#555"/><rect x="891" y="14" width="1" height="2" fill="#555"/><rect x="895" y="14" width="1" height="2" fill="#555"/><rect x="898" y="14" width="1" height="2" fill="#555"/><rect x="902" y="14" width="1" height="2" fill="#555"/><rect x="906" y="12" width="1" height="4" fill="#555"/><rect x="910" y="14" width="1" height="2" fill="#555"/><rect x="914" y="14" width="1" height="2" fill="#555"/><rect x="917" y="14" width="1" height="2" fill="#555"/><rect x="921" y="14" width="1" height="2" fill="#555"/><rect x="925" y="8" width="1" height="8" fill="#555"/><rect x="929" y="14" width="1" height="2" fill="#555"/><rect x="932" y="14" width="1" height="2" fill="#555"/><rect x="936" y="14" width="1" height="2" fill="#555"/><rect x="940" y="14" width="1" height="2" fill="#555"/><rect x="944" y="12" width="1" height="4" fill="#555"/><rect x="948" y="14" width="1" height="2" fill="#555"/><rect x="951" y="14" width="1" height="2" fill="#555"/><rect x="955" y="14" width="1" height="2" fill="#555"/><rect x="959" y="14" width="1" height="2" fill="#555"/><rect x="963" y="8" width="1" height="8" fill="#555"/><rect x="966" y="14" width="1" height="2" fill="#555"/><rect x="970" y="14" width="1" height="2" fill="#555"/><rect x="974" y="14" width="1" height="2" fill="#555"/><rect x="978" y="14" width="1" height="2" fill="#555"/><rect x="982" y="12" width="1" height="4" fill="#555"/><rect x="985" y="14" width="1" height="2" fill="#555"/><rect x="989" y="14" width="1" height="2" fill="#555"/><rect x="993" y="14" width="1" height="2" fill="#555"/><rect x="997" y="14" width="1" height="2" fill="#555"/><rect x="1001" y="8" width="1" height="8" fill="#555"/><rect x="1004" y="14" width="1" height="2" fill="#555"/><rect x="1008" y="14" width="1" height="2" fill="#555"/><rect x="1012" y="14" width="1" height="2" fill="#555"/><rect x="1016" y="14" width="1" height="2" fill="#555"/><rect x="1019" y="12" width="1" height="4" fill="#555"/><rect x="1023" y="14" width="1" height="2" fill="#555"/><rect x="1027" y="14" width="1" height="2" fill="#555"/><rect x="1031" y="14" width="1" height="2" fill="#555"/><rect x="1035" y="14" width="1" height="2" fill="#555"/><rect x="1038" y="8" width="1" height="8" fill="#555"/><rect x="1042" y="14" width="1" height="2" fill="#555"/><rect x="1046" y="14" width="1" height="2" fill="#555"/><rect x="1050" y="14" width="1" height="2" fill="#555"/><rect x="1053" y="14" width="1" height="2" fill="#555"/><rect x="1057" y="12" width="1" height="4" fill="#555"/><rect x="1061" y="14" width="1" height="2" fill="#555"/><rect x="1065" y="14" width="1" height="2" fill="#555"/><rect x="1069" y="14" width="1" height="2" fill="#555"/><rect x="1072" y="14" width="1" height="2" fill="#555"/><rect x="1076" y="8" width="1" height="8" fill="#555"/><rect x="1080" y="14" width="1" height="2" fill="#555"/><rect x="1084" y="14" width="1" height="2" fill="#555"/><rect x="1087" y="14" width="1" height="2" fill="#555"/><rect x="1091" y="14" width="1" height="2" fill="#555"/><rect x="1095" y="12" width="1" height="4" fill="#555"/><rect x="1099" y="14" width="1" height="2" fill="#555"/><rect x="1103" y="14" width="1" height="2" fill="#555"/><rect x="1106" y="14" width="1" height="2" fill="#555"/><rect x="1110" y="14" width="1" height="2" fill="#555"/><rect x="1114" y="8" width="1" height="8" fill="#555"/><rect x="1118" y="14" width="1" height="2" fill="#555"/><rect x="1121" y="14" width="1" height="2" fill="#555"/><rect x="1125" y="14" width="1" height="2" fill="#555"/><rect x="1129" y="14" width="1" height="2" fill="#555"/><rect x="1133" y="12" width="1" height="4" fill="#555"/><rect x="1137" y="14" width="1" height="2" fill="#555"/><rect x="1140" y="14" width="1" height="2" fill="#555"/><rect x="1144" y="14" width="1" height="2" fill="#555"/><rect x="1148" y="14" width="1" height="2" fill="#555"/><text x="359.2" y="12" font-size="9.5" fill="#666" font-family="Liberation Sans">2</text><text x="397.0" y="12" font-size="9.5" fill="#666" font-family="Liberation Sans">1</text><text x="472.6" y="12" font-size="9.5" fill="#666" font-family="Liberation Sans">1</text><text x="510.4" y="12" font-size="9.5" fill="#666" font-family="Liberation Sans">2</text><text x="548.2" y="12" font-size="9.5" fill="#666" font-family="Liberation Sans">3</text><text x="586.0" y="12" font-size="9.5" fill="#666" font-family="Liberation Sans">4</text><text x="623.8" y="12" font-size="9.5" fill="#666" font-family="Liberation Sans">5</text><text x="661.6" y="12" font-size="9.5" fill="#666" font-family="Liberation Sans">6</text><text x="699.4" y="12" font-size="9.5" fill="#666" font-family="Liberation Sans">7</text><text x="737.2" y="12" font-size="9.5" fill="#666" font-family="Liberation Sans">8</text><text x="775.0" y="12" font-size="9.5" fill="#666" font-family="Liberation Sans">9</text><text x="812.8" y="12" font-size="9.5" fill="#666" font-family="Liberation Sans">10</text><text x="850.6" y="12" font-size="9.5" fill="#666" font-family="Liberation Sans">11</text><text x="888.4" y="12" font-size="9.5" fill="#666" font-family="Liberation Sans">12</text><text x="926.2" y="12" font-size="9.5" fill="#666" font-family="Liberation Sans">13</text><text x="964.0" y="12" font-size="9.5" fill="#666" font-family="Liberation Sans">14</text><text x="1001.8" y="12" font-size="9.5" fill="#666" font-family="Liberation Sans">15</text><text x="1039.6" y="12" font-size="9.5" fill="#666" font-family="Liberation Sans">16</text><text x="1077.4" y="12" font-size="9.5" fill="#666" font-family="Liberation Sans">17</text><text x="1115.2" y="12" font-size="9.5" fill="#666" font-family="Liberation Sans">18</text><path d="M434 5L441 12L434 16Z" fill="#555"/><path d="M1075 5L1068 12L1075 16Z" fill="#555"/><path d="M425 22H434M431 19L434 22L431 25M435 18V26" stroke="#555" stroke-width="1.2" fill="none"/><path d="M1086 22H1078M1081 19L1078 22L1081 25M1077 18V26" stroke="#555" stroke-width="1.2" fill="none"/><path d="M509 17V21H513" stroke="#444" stroke-width="1.3" fill="none"/><path d="M585 17V21H589" stroke="#444" stroke-width="1.3" fill="none"/><path d="M660 17V21H664" stroke="#444" stroke-width="1.3" fill="none"/><path d="M736 17V21H740" stroke="#444" stroke-width="1.3" fill="none"/><path d="M811 17V21H815" stroke="#444" stroke-width="1.3" fill="none"/><path d="M887 17V21H891" stroke="#444" stroke-width="1.3" fill="none"/><path d="M963 17V21H967" stroke="#444" stroke-width="1.3" fill="none"/><path d="M1038 17V21H1042" stroke="#444" stroke-width="1.3" fill="none"/></svg>
<div class="a" style="left:209px;top:179px;width:14px;height:656px;background:#fafafa"></div>
<svg class="a" style="left:204px;top:180px" width="25" height="655"><rect x="14" y="2" width="2" height="1" fill="#555"/><rect x="14" y="6" width="2" height="1" fill="#555"/><rect x="12" y="10" width="4" height="1" fill="#555"/><rect x="14" y="14" width="2" height="1" fill="#555"/><rect x="14" y="17" width="2" height="1" fill="#555"/><rect x="14" y="21" width="2" height="1" fill="#555"/><rect x="14" y="25" width="2" height="1" fill="#555"/><rect x="8" y="29" width="8" height="1" fill="#555"/><rect x="14" y="32" width="2" height="1" fill="#555"/><rect x="14" y="36" width="2" height="1" fill="#555"/><rect x="14" y="40" width="2" height="1" fill="#555"/><rect x="14" y="44" width="2" height="1" fill="#555"/><rect x="12" y="48" width="4" height="1" fill="#555"/><rect x="14" y="51" width="2" height="1" fill="#555"/><rect x="14" y="55" width="2" height="1" fill="#555"/><rect x="14" y="59" width="2" height="1" fill="#555"/><rect x="14" y="63" width="2" height="1" fill="#555"/><rect x="8" y="66" width="8" height="1" fill="#555"/><rect x="14" y="70" width="2" height="1" fill="#555"/><rect x="14" y="74" width="2" height="1" fill="#555"/><rect x="14" y="78" width="2" height="1" fill="#555"/><rect x="14" y="82" width="2" height="1" fill="#555"/><rect x="12" y="85" width="4" height="1" fill="#555"/><rect x="14" y="89" width="2" height="1" fill="#555"/><rect x="14" y="93" width="2" height="1" fill="#555"/><rect x="14" y="97" width="2" height="1" fill="#555"/><rect x="14" y="101" width="2" height="1" fill="#555"/><rect x="8" y="104" width="8" height="1" fill="#555"/><rect x="14" y="108" width="2" height="1" fill="#555"/><rect x="14" y="112" width="2" height="1" fill="#555"/><rect x="14" y="116" width="2" height="1" fill="#555"/><rect x="14" y="119" width="2" height="1" fill="#555"/><rect x="12" y="123" width="4" height="1" fill="#555"/><rect x="14" y="127" width="2" height="1" fill="#555"/><rect x="14" y="131" width="2" height="1" fill="#555"/><rect x="14" y="135" width="2" height="1" fill="#555"/><rect x="14" y="138" width="2" height="1" fill="#555"/><rect x="8" y="142" width="8" height="1" fill="#555"/><rect x="14" y="146" width="2" height="1" fill="#555"/><rect x="14" y="150" width="2" height="1" fill="#555"/><rect x="14" y="153" width="2" height="1" fill="#555"/><rect x="14" y="157" width="2" height="1" fill="#555"/><rect x="12" y="161" width="4" height="1" fill="#555"/><rect x="14" y="165" width="2" height="1" fill="#555"/><rect x="14" y="169" width="2" height="1" fill="#555"/><rect x="14" y="172" width="2" height="1" fill="#555"/><rect x="14" y="176" width="2" height="1" fill="#555"/><rect x="8" y="180" width="8" height="1" fill="#555"/><rect x="14" y="184" width="2" height="1" fill="#555"/><rect x="14" y="187" width="2" height="1" fill="#555"/><rect x="14" y="191" width="2" height="1" fill="#555"/><rect x="14" y="195" width="2" height="1" fill="#555"/><rect x="12" y="199" width="4" height="1" fill="#555"/><rect x="14" y="203" width="2" height="1" fill="#555"/><rect x="14" y="206" width="2" height="1" fill="#555"/><rect x="14" y="210" width="2" height="1" fill="#555"/><rect x="14" y="214" width="2" height="1" fill="#555"/><rect x="8" y="218" width="8" height="1" fill="#555"/><rect x="14" y="221" width="2" height="1" fill="#555"/><rect x="14" y="225" width="2" height="1" fill="#555"/><rect x="14" y="229" width="2" height="1" fill="#555"/><rect x="14" y="233" width="2" height="1" fill="#555"/><rect x="12" y="237" width="4" height="1" fill="#555"/><rect x="14" y="240" width="2" height="1" fill="#555"/><rect x="14" y="244" width="2" height="1" fill="#555"/><rect x="14" y="248" width="2" height="1" fill="#555"/><rect x="14" y="252" width="2" height="1" fill="#555"/><rect x="8" y="256" width="8" height="1" fill="#555"/><rect x="14" y="259" width="2" height="1" fill="#555"/><rect x="14" y="263" width="2" height="1" fill="#555"/><rect x="14" y="267" width="2" height="1" fill="#555"/><rect x="14" y="271" width="2" height="1" fill="#555"/><rect x="12" y="274" width="4" height="1" fill="#555"/><rect x="14" y="278" width="2" height="1" fill="#555"/><rect x="14" y="282" width="2" height="1" fill="#555"/><rect x="14" y="286" width="2" height="1" fill="#555"/><rect x="14" y="290" width="2" height="1" fill="#555"/><rect x="8" y="293" width="8" height="1" fill="#555"/><rect x="14" y="297" width="2" height="1" fill="#555"/><rect x="14" y="301" width="2" height="1" fill="#555"/><rect x="14" y="305" width="2" height="1" fill="#555"/><rect x="14" y="308" width="2" height="1" fill="#555"/><rect x="12" y="312" width="4" height="1" fill="#555"/><rect x="14" y="316" width="2" height="1" fill="#555"/><rect x="14" y="320" width="2" height="1" fill="#555"/><rect x="14" y="324" width="2" height="1" fill="#555"/><rect x="14" y="327" width="2" height="1" fill="#555"/><rect x="8" y="331" width="8" height="1" fill="#555"/><rect x="14" y="335" width="2" height="1" fill="#555"/><rect x="14" y="339" width="2" height="1" fill="#555"/><rect x="14" y="342" width="2" height="1" fill="#555"/><rect x="14" y="346" width="2" height="1" fill="#555"/><rect x="12" y="350" width="4" height="1" fill="#555"/><rect x="14" y="354" width="2" height="1" fill="#555"/><rect x="14" y="358" width="2" height="1" fill="#555"/><rect x="14" y="361" width="2" height="1" fill="#555"/><rect x="14" y="365" width="2" height="1" fill="#555"/><rect x="8" y="369" width="8" height="1" fill="#555"/><rect x="14" y="373" width="2" height="1" fill="#555"/><rect x="14" y="376" width="2" height="1" fill="#555"/><rect x="14" y="380" width="2" height="1" fill="#555"/><rect x="14" y="384" width="2" height="1" fill="#555"/><rect x="12" y="388" width="4" height="1" fill="#555"/><rect x="14" y="392" width="2" height="1" fill="#555"/><rect x="14" y="395" width="2" height="1" fill="#555"/><rect x="14" y="399" width="2" height="1" fill="#555"/><rect x="14" y="403" width="2" height="1" fill="#555"/><rect x="8" y="407" width="8" height="1" fill="#555"/><rect x="14" y="410" width="2" height="1" fill="#555"/><rect x="14" y="414" width="2" height="1" fill="#555"/><rect x="14" y="418" width="2" height="1" fill="#555"/><rect x="14" y="422" width="2" height="1" fill="#555"/><rect x="12" y="426" width="4" height="1" fill="#555"/><rect x="14" y="429" width="2" height="1" fill="#555"/><rect x="14" y="433" width="2" height="1" fill="#555"/><rect x="14" y="437" width="2" height="1" fill="#555"/><rect x="14" y="441" width="2" height="1" fill="#555"/><rect x="8" y="444" width="8" height="1" fill="#555"/><rect x="14" y="448" width="2" height="1" fill="#555"/><rect x="14" y="452" width="2" height="1" fill="#555"/><rect x="14" y="456" width="2" height="1" fill="#555"/><rect x="14" y="460" width="2" height="1" fill="#555"/><rect x="12" y="463" width="4" height="1" fill="#555"/><rect x="14" y="467" width="2" height="1" fill="#555"/><rect x="14" y="471" width="2" height="1" fill="#555"/><rect x="14" y="475" width="2" height="1" fill="#555"/><rect x="14" y="479" width="2" height="1" fill="#555"/><rect x="8" y="482" width="8" height="1" fill="#555"/><rect x="14" y="486" width="2" height="1" fill="#555"/><rect x="14" y="490" width="2" height="1" fill="#555"/><rect x="14" y="494" width="2" height="1" fill="#555"/><rect x="14" y="497" width="2" height="1" fill="#555"/><rect x="12" y="501" width="4" height="1" fill="#555"/><rect x="14" y="505" width="2" height="1" fill="#555"/><rect x="14" y="509" width="2" height="1" fill="#555"/><rect x="14" y="513" width="2" height="1" fill="#555"/><rect x="14" y="516" width="2" height="1" fill="#555"/><rect x="8" y="520" width="8" height="1" fill="#555"/><rect x="14" y="524" width="2" height="1" fill="#555"/><rect x="14" y="528" width="2" height="1" fill="#555"/><rect x="14" y="531" width="2" height="1" fill="#555"/><rect x="14" y="535" width="2" height="1" fill="#555"/><rect x="12" y="539" width="4" height="1" fill="#555"/><rect x="14" y="543" width="2" height="1" fill="#555"/><rect x="14" y="547" width="2" height="1" fill="#555"/><rect x="14" y="550" width="2" height="1" fill="#555"/><rect x="14" y="554" width="2" height="1" fill="#555"/><rect x="8" y="558" width="8" height="1" fill="#555"/><rect x="14" y="562" width="2" height="1" fill="#555"/><rect x="14" y="565" width="2" height="1" fill="#555"/><rect x="14" y="569" width="2" height="1" fill="#555"/><rect x="14" y="573" width="2" height="1" fill="#555"/><rect x="12" y="577" width="4" height="1" fill="#555"/><rect x="14" y="581" width="2" height="1" fill="#555"/><rect x="14" y="584" width="2" height="1" fill="#555"/><rect x="14" y="588" width="2" height="1" fill="#555"/><rect x="14" y="592" width="2" height="1" fill="#555"/><rect x="8" y="596" width="8" height="1" fill="#555"/><rect x="14" y="599" width="2" height="1" fill="#555"/><rect x="14" y="603" width="2" height="1" fill="#555"/><rect x="14" y="607" width="2" height="1" fill="#555"/><rect x="14" y="611" width="2" height="1" fill="#555"/><rect x="12" y="615" width="4" height="1" fill="#555"/><rect x="14" y="618" width="2" height="1" fill="#555"/><rect x="14" y="622" width="2" height="1" fill="#555"/><rect x="14" y="626" width="2" height="1" fill="#555"/><rect x="14" y="630" width="2" height="1" fill="#555"/><rect x="8" y="634" width="8" height="1" fill="#555"/><rect x="14" y="637" width="2" height="1" fill="#555"/><rect x="14" y="641" width="2" height="1" fill="#555"/><rect x="14" y="645" width="2" height="1" fill="#555"/><rect x="14" y="649" width="2" height="1" fill="#555"/><rect x="12" y="652" width="4" height="1" fill="#555"/><text transform="translate(12,29.7) rotate(-90)" text-anchor="end" font-size="9" fill="#666" font-family="Liberation Sans">2</text><text transform="translate(12,67.5) rotate(-90)" text-anchor="end" font-size="9" fill="#666" font-family="Liberation Sans">1</text><text transform="translate(12,143.1) rotate(-90)" text-anchor="end" font-size="9" fill="#666" font-family="Liberation Sans">1</text><text transform="translate(12,180.9) rotate(-90)" text-anchor="end" font-size="9" fill="#666" font-family="Liberation Sans">2</text><text transform="translate(12,218.7) rotate(-90)" text-anchor="end" font-size="9" fill="#666" font-family="Liberation Sans">3</text><text transform="translate(12,256.5) rotate(-90)" text-anchor="end" font-size="9" fill="#666" font-family="Liberation Sans">4</text><text transform="translate(12,294.3) rotate(-90)" text-anchor="end" font-size="9" fill="#666" font-family="Liberation Sans">5</text><text transform="translate(12,332.1) rotate(-90)" text-anchor="end" font-size="9" fill="#666" font-family="Liberation Sans">6</text><text transform="translate(12,369.9) rotate(-90)" text-anchor="end" font-size="9" fill="#666" font-family="Liberation Sans">7</text><text transform="translate(12,407.7) rotate(-90)" text-anchor="end" font-size="9" fill="#666" font-family="Liberation Sans">8</text><text transform="translate(12,445.5) rotate(-90)" text-anchor="end" font-size="9" fill="#666" font-family="Liberation Sans">9</text><text transform="translate(12,483.3) rotate(-90)" text-anchor="end" font-size="9" fill="#666" font-family="Liberation Sans">10</text><text transform="translate(12,521.1) rotate(-90)" text-anchor="end" font-size="9" fill="#666" font-family="Liberation Sans">11</text><text transform="translate(12,558.9) rotate(-90)" text-anchor="end" font-size="9" fill="#666" font-family="Liberation Sans">12</text><text transform="translate(12,596.7) rotate(-90)" text-anchor="end" font-size="9" fill="#666" font-family="Liberation Sans">13</text><text transform="translate(12,634.5) rotate(-90)" text-anchor="end" font-size="9" fill="#666" font-family="Liberation Sans">14</text><path d="M19 104.5H25M22 95V104" stroke="#555" stroke-width="1.6" fill="none"/><path d="M19.5 101.5L22 104L24.5 101.5" stroke="#555" stroke-width="1.2" fill="none"/></svg>
<div class="a" style="left:229px;top:179px;width:1050px;height:656px;background:#d8d8d8;overflow:hidden">
<div class="a" style="left:128px;top:0;width:795px;height:700px;background:#fff;border-left:2px solid #111"></div>
<div class="a" style="left:923px;top:0;width:9px;height:700px;background:linear-gradient(90deg,#111 0,#333 2px,#888 5px,#d8d8d8 9px)"></div>
</div>
<div class="a" style="left:1279px;top:180px;width:18px;height:655px;background:#efefef;border-left:1px solid #fff"></div>
<svg class="a" style="left:1283px;top:185px" width="10" height="8"><path d="M1 6.5L5 2.5L9 6.5" stroke="#444" stroke-width="1.8" fill="none"/></svg>
<svg class="a" style="left:1283px;top:823px" width="10" height="8"><path d="M1 1.5L5 5.5L9 1.5" stroke="#444" stroke-width="1.8" fill="none"/></svg>
<div class="a" style="left:1280px;top:270px;width:15px;height:340px;background:#cacaca"></div>
<div class="a" style="left:204px;top:835px;width:1093px;height:1px;background:#dcdcdc"></div>
<div class="a" style="left:434px;top:287px;font-size:9.25px;color:#111;">Sample Company · Sample street 1245 · 12345 Sample town</div>
<div class="a" style="left:434px;top:298.0px;font-size:12.3px;color:#111;">John Doe</div>
<div class="a" style="left:434px;top:311.8px;font-size:12.3px;color:#111;">123 Anywhere Street</div>
<div class="a" style="left:434px;top:325.6px;font-size:12.3px;color:#111;">12345 Anytown</div>
<div class="a" style="left:434px;top:368.0px;font-size:12.3px;color:#111;">Delivery address:</div>
<div class="a" style="left:434px;top:382.2px;font-size:12.3px;color:#111;">John Doe</div>
<div class="a" style="left:434px;top:396.4px;font-size:12.3px;color:#111;">125 Anywhere Street</div>
<div class="a" style="left:434px;top:410.6px;font-size:12.3px;color:#111;">12345 Anytown</div>
<div class="a" style="left:434px;top:452.5px;font-size:13.3px;font-weight:bold;color:#111;">Orderconfirmation O202006/0076</div>
<div class="a" style="left:435px;top:485.5px;font-size:12.8px;font-weight:bold;color:#111;">Subject:</div>
<div class="a" style="left:434px;top:515px;font-size:12.3px;color:#111;">Dear Mr. Doe</div>
<div class="a" style="left:434px;top:543px;font-size:12.3px;color:#111;">thanks for your order. we confirm as following:</div>
<div class="a" style="left:816px;top:472px;width:262px;height:1px;background:#c0c0c0"></div>
<div class="a" style="left:1077px;top:302px;width:1px;height:171px;background:#c0c0c0"></div>
<div class="a" style="left:816px;top:302px;width:1px;height:171px;background:#c0c0c0"></div>
<div class="a" style="left:817px;top:316px;width:259px;height:1px;background:#c0c0c0"></div>
<div class="a" style="left:817px;top:330px;width:259px;height:1px;background:#c0c0c0"></div>
<div class="a" style="left:817px;top:344px;width:259px;height:1px;background:#c0c0c0"></div>
<div class="a" style="left:817px;top:359px;width:259px;height:1px;background:#c0c0c0"></div>
<div class="a" style="left:817px;top:373px;width:259px;height:1px;background:#c0c0c0"></div>
<div class="a" style="left:817px;top:387px;width:259px;height:1px;background:#c0c0c0"></div>
<div class="a" style="left:817px;top:401px;width:259px;height:1px;background:#c0c0c0"></div>
<div class="a" style="left:817px;top:415px;width:259px;height:1px;background:#c0c0c0"></div>
<div class="a" style="left:817px;top:430px;width:259px;height:1px;background:#c0c0c0"></div>
<div class="a" style="left:910px;top:302px;width:1px;height:143px;background:#c0c0c0"></div>
<div class="a" style="left:818px;top:302.5px;font-size:12.3px;color:#111;">Customer No.</div>
<div class="a" style="left:913px;top:302.5px;font-size:12.3px;color:#111;">10000</div>
<div class="a" style="left:818px;top:316.5px;font-size:12.3px;color:#111;">Project</div>
<div class="a" style="left:913px;top:316.5px;font-size:12.3px;color:#111;">VAT reduction</div>
<div class="a" style="left:818px;top:330.5px;font-size:12.3px;color:#111;">Quote No.</div>
<div class="a" style="left:913px;top:330.5px;font-size:12.3px;color:#111;"></div>
<div class="a" style="left:818px;top:344.5px;font-size:12.3px;color:#111;"></div>
<div class="a" style="left:913px;top:344.5px;font-size:12.3px;color:#111;"></div>
<div class="a" style="left:818px;top:359.5px;font-size:12.3px;color:#111;">Your Contact</div>
<div class="a" style="left:913px;top:359.5px;font-size:12.3px;color:#111;">Anton Admin</div>
<div class="a" style="left:818px;top:373.5px;font-size:12.3px;color:#111;">EMail</div>
<div class="a" style="left:913px;top:373.5px;font-size:12.3px;color:#111;">noreply@ingenious.de</div>
<div class="a" style="left:818px;top:387.5px;font-size:12.3px;color:#111;">Phone</div>
<div class="a" style="left:913px;top:387.5px;font-size:12.3px;color:#111;">0123/456789</div>
<div class="a" style="left:818px;top:401.5px;font-size:12.3px;color:#111;">Fax</div>
<div class="a" style="left:913px;top:401.5px;font-size:12.3px;color:#111;">0123/456780</div>
<div class="a" style="left:818px;top:415.5px;font-size:12.3px;color:#111;"></div>
<div class="a" style="left:913px;top:415.5px;font-size:12.3px;color:#111;"></div>
<div class="a" style="left:818px;top:430.5px;font-size:12.3px;color:#111;">Date</div>
<div class="a" style="left:913px;top:430.5px;font-size:12.3px;color:#111;">6/27/2020</div>
<div class="a" style="left:816px;top:302px;width:260px;height:143px;border:1.5px solid #000"></div>
<div class="a" style="left:434px;top:571px;width:645px;height:31px;border:1.5px solid #000"></div>
<div class="a" style="left:483px;top:572px;width:1px;height:52px;background:#c0c0c0"></div>
<div class="a" style="left:532px;top:572px;width:1px;height:52px;background:#c0c0c0"></div>
<div class="a" style="left:808px;top:572px;width:1px;height:52px;background:#c0c0c0"></div>
<div class="a" style="left:865px;top:572px;width:1px;height:52px;background:#c0c0c0"></div>
<div class="a" style="left:930px;top:572px;width:1px;height:52px;background:#c0c0c0"></div>
<div class="a" style="left:983px;top:572px;width:1px;height:52px;background:#c0c0c0"></div>
<div class="a" style="left:1004px;top:572px;width:1px;height:52px;background:#c0c0c0"></div>
<div class="a" style="left:434px;top:602px;width:1px;height:41px;background:#c0c0c0"></div>
<div class="a" style="left:1078px;top:602px;width:1px;height:41px;background:#c0c0c0"></div>
<div class="a" style="left:808px;top:624px;width:1px;height:19px;background:#c0c0c0"></div>
<div class="a" style="left:434px;top:624px;width:645px;height:1px;background:#c0c0c0"></div>
<div class="a" style="left:439.5px;top:574.5px;font-size:12.3px;font-weight:bold;color:#111;">PosNr.</div>
<div class="a" style="left:485px;top:574.5px;font-size:12.3px;font-weight:bold;color:#111;">Art.Nr.</div>
<div class="a" style="left:534px;top:573.5px;font-size:12.3px;font-weight:bold;color:#111;">Description</div>
<div class="a" style="left:813px;top:574.5px;font-size:12.3px;font-weight:bold;color:#111;">Quantity</div>
<div class="a" style="left:626px;width:300px;text-align:right;top:574.5px;font-size:12.3px;font-weight:bold;color:#111;">SP EUR</div>
<div class="a" style="left:680px;width:300px;text-align:right;top:574.5px;font-size:12.3px;font-weight:bold;color:#111;">Rebate</div>
<div class="a" style="left:987.5px;top:574px;font-size:10.5px;font-weight:bold;color:#111;">tax</div>
<div class="a" style="left:773px;width:300px;text-align:right;top:574.5px;font-size:12.3px;font-weight:bold;color:#111;">GP EUR</div>
<div class="a" style="left:534px;top:587px;width:271px;height:12px;border:1px solid #c8c8c8"></div>
<div class="a" style="left:618px;top:587px;width:1px;height:12px;background:#c8c8c8"></div>
<div class="a" style="left:712px;top:587px;width:1px;height:12px;background:#c8c8c8"></div>
<div class="a" style="left:536px;top:588px;font-size:10.5px;font-weight:bold;color:#111;">Width</div>
<div class="a" style="left:620px;top:588px;font-size:10.5px;font-weight:bold;color:#111;">Height</div>
<div class="a" style="left:715px;top:588px;font-size:10.5px;font-weight:bold;color:#111;">Surface</div>
<div class="a" style="left:439.5px;top:606.5px;font-size:12.3px;color:#111;">001</div>
<div class="a" style="left:534px;top:606.5px;font-size:12.3px;color:#111;">Example article with regular VAT rate</div>
<div class="a" style="left:563px;width:300px;text-align:right;top:606.5px;font-size:12.3px;color:#111;">1 PC</div>
<div class="a" style="left:628px;width:300px;text-align:right;top:606.5px;font-size:12.3px;color:#111;">100.00</div>
<div class="a" style="left:702px;width:300px;text-align:right;top:607px;font-size:10.5px;color:#111;">19</div>
<div class="a" style="left:776.5px;width:300px;text-align:right;top:606.5px;font-size:12.3px;color:#111;">100.00</div>
<div class="a" style="left:434px;top:643px;width:375px;height:93px;border:1.5px solid #000"></div>
<div class="a" style="left:438.5px;top:652px;font-size:12.3px;font-weight:bold;color:#111;">Payment terms:</div>
<div class="a" style="left:435px;top:674px;font-size:12.3px;color:#111;">Within 7 days with 2.00% dsicount or within 14 days in total.</div>
<div class="a" style="left:807px;top:643px;width:272px;height:92px;border:1.5px solid #000"></div>
<div class="a" style="left:809px;top:645px;width:266px;height:89px;border:1px solid #c8c8c8"></div>
<div class="a" style="left:899px;top:645px;width:1px;height:89px;background:#c8c8c8"></div>
<div class="a" style="left:996px;top:645px;width:1px;height:89px;background:#c8c8c8"></div>
<div class="a" style="left:809px;top:668px;width:266px;height:1px;background:#c8c8c8"></div>
<div class="a" style="left:809px;top:689px;width:266px;height:1px;background:#c8c8c8"></div>
<div class="a" style="left:809px;top:711px;width:266px;height:1px;background:#c8c8c8"></div>
<div class="a" style="left:812px;top:651px;font-size:12.3px;font-weight:bold;color:#111;">Total net</div>
<div class="a" style="left:774px;width:300px;text-align:right;top:651px;font-size:12.3px;font-weight:bold;color:#111;">100.00</div>
<div class="a" style="left:812px;top:672.5px;font-size:12.3px;color:#111;">VAT 19 %</div>
<div class="a" style="left:901.5px;top:673.5px;font-size:10.4px;color:#111;">on 100.00 EUR</div>
<div class="a" style="left:774px;width:300px;text-align:right;top:672.5px;font-size:12.3px;color:#111;">19.00</div>
<div class="a" style="left:812px;top:693.5px;font-size:12.3px;color:#111;">VAT 7 %</div>
<div class="a" style="left:901.5px;top:694.5px;font-size:10.4px;color:#111;">on 0.00 EUR</div>
<div class="a" style="left:774px;width:300px;text-align:right;top:693.5px;font-size:12.3px;color:#111;">0.00</div>
<div class="a" style="left:812px;top:715.5px;font-size:12.3px;font-weight:bold;color:#111;">Gross total</div>
<div class="a" style="left:774px;width:300px;text-align:right;top:715.5px;font-size:12.3px;font-weight:bold;color:#111;">119.00</div>
<div class="a" style="left:1297px;top:154px;width:303px;height:682px;background:#f6f6f6;border-left:1px solid #a8a8a8"></div>
<div class="a" style="left:1298px;top:154px;width:281px;height:682px;background:#dcdcdc;overflow:hidden">
<div class="a" style="left:0;top:0px;width:281px;height:21px;background:#dcdcdc;border-top:1px solid #bcbcbc"></div>
<div class="a" style="left:20px;top:6px;font-size:11px;font-weight:bold;color:#222;letter-spacing:0.4px">Miscellaneous</div>
<svg class="a" style="left:268px;top:8px" width="9" height="6"><path d="M1 5L4.5 1.5L8 5" stroke="#888" stroke-width="1.3" fill="none"/></svg>
<div class="a" style="left:16px;top:21px;width:125px;height:20px;background:#f0f0f0;border-top:1px solid #c2c2c2;border-left:1px solid #b8b8b8"></div>
<div class="a" style="left:141px;top:21px;width:140px;height:20px;background:#fff;border-top:1px solid #c2c2c2;border-left:1px solid #c2c2c2"></div>
<div class="a" style="left:34px;top:26px;font-size:11px;color:#0000ff">Name</div>
<div class="a" style="left:145px;top:26px;font-size:11px;color:#808080">Orderconfirmation</div>
<div class="a" style="left:16px;top:40px;width:125px;height:20px;background:#f0f0f0;border-top:1px solid #c2c2c2;border-left:1px solid #b8b8b8"></div>
<div class="a" style="left:141px;top:40px;width:140px;height:20px;background:#fff;border-top:1px solid #c2c2c2;border-left:1px solid #c2c2c2"></div>
<div class="a" style="left:34px;top:45px;font-size:11px;color:#0000ff">Number</div>
<div class="a" style="left:145px;top:45px;font-size:11px;color:#808080">O202006/0076</div>
<div class="a" style="left:16px;top:59px;width:125px;height:20px;background:#f0f0f0;border-top:1px solid #c2c2c2;border-left:1px solid #b8b8b8"></div>
<div class="a" style="left:141px;top:59px;width:140px;height:20px;background:#fff;border-top:1px solid #c2c2c2;border-left:1px solid #c2c2c2"></div>
<div class="a" style="left:34px;top:64px;font-size:11px;color:#1a1a1a">Kommission</div>
<div class="a" style="left:145px;top:64px;font-size:11px;color:#1a1a1a">VAT reduction</div>
<svg class="a" style="left:269px;top:67px" width="8" height="4"><path d="M0 0H8L4 4Z" fill="#111"/></svg>
<div class="a" style="left:16px;top:78px;width:125px;height:20px;background:#f0f0f0;border-top:1px solid #c2c2c2;border-left:1px solid #b8b8b8"></div>
<div class="a" style="left:141px;top:78px;width:140px;height:20px;background:#fff;border-top:1px solid #c2c2c2;border-left:1px solid #c2c2c2"></div>
<div class="a" style="left:34px;top:83px;font-size:11px;color:#1a1a1a">Printed on</div>
<div class="a" style="left:145px;top:83px;font-size:11px;color:#1a1a1a">6/27/2020</div>
<svg class="a" style="left:269px;top:86px" width="8" height="4"><path d="M0 0H8L4 4Z" fill="#111"/></svg>
<div class="a" style="left:16px;top:97px;width:125px;height:20px;background:#f0f0f0;border-top:1px solid #c2c2c2;border-left:1px solid #b8b8b8"></div>
<div class="a" style="left:141px;top:97px;width:140px;height:20px;background:#fff;border-top:1px solid #c2c2c2;border-left:1px solid #c2c2c2"></div>
<div class="a" style="left:34px;top:102px;font-size:11px;color:#0000ff">Contact</div>
<div class="a" style="left:145px;top:102px;font-size:11px;color:#808080">Doe, John</div>
<div class="a" style="left:268px;top:107px;width:2px;height:2px;background:#111;box-shadow:3px 0 #111,6px 0 #111"></div>
<div class="a" style="left:16px;top:116px;width:125px;height:20px;background:#f0f0f0;border-top:1px solid #c2c2c2;border-left:1px solid #b8b8b8"></div>
<div class="a" style="left:141px;top:116px;width:140px;height:20px;background:#fff;border-top:1px solid #c2c2c2;border-left:1px solid #c2c2c2"></div>
<div class="a" style="left:34px;top:121px;font-size:11px;color:#0000ff">Project template</div>
<div class="a" style="left:145px;top:121px;font-size:11px;color:#808080">Order Confirmation</div>
<svg class="a" style="left:269px;top:124px" width="8" height="4"><path d="M0 0H8L4 4Z" fill="#111"/></svg>
<div class="a" style="left:16px;top:135px;width:125px;height:20px;background:#f0f0f0;border-top:1px solid #c2c2c2;border-left:1px solid #b8b8b8"></div>
<div class="a" style="left:141px;top:135px;width:140px;height:20px;background:#fff;border-top:1px solid #c2c2c2;border-left:1px solid #c2c2c2"></div>
<div class="a" style="left:34px;top:140px;font-size:11px;color:#1a1a1a">Contact person</div>
<div class="a" style="left:145px;top:140px;font-size:11px;color:#1a1a1a">Anton Admin</div>
<svg class="a" style="left:269px;top:143px" width="8" height="4"><path d="M0 0H8L4 4Z" fill="#111"/></svg>
<div class="a" style="left:16px;top:154px;width:125px;height:20px;background:#f0f0f0;border-top:1px solid #c2c2c2;border-left:1px solid #b8b8b8"></div>
<div class="a" style="left:141px;top:154px;width:140px;height:20px;background:#fff;border-top:1px solid #c2c2c2;border-left:1px solid #c2c2c2"></div>
<div class="a" style="left:34px;top:159px;font-size:11px;color:#1a1a1a">Representative</div>
<div class="a" style="left:145px;top:159px;font-size:11px;color:#1a1a1a">Ronald Rich</div>
<svg class="a" style="left:269px;top:162px" width="8" height="4"><path d="M0 0H8L4 4Z" fill="#111"/></svg>
<div class="a" style="left:16px;top:173px;width:125px;height:20px;background:#f0f0f0;border-top:1px solid #c2c2c2;border-left:1px solid #b8b8b8"></div>
<div class="a" style="left:141px;top:173px;width:140px;height:20px;background:#fff;border-top:1px solid #c2c2c2;border-left:1px solid #c2c2c2"></div>
<div class="a" style="left:34px;top:178px;font-size:11px;color:#1a1a1a">Trip</div>
<div class="a" style="left:145px;top:178px;font-size:11px;color:#1a1a1a">Wednesday</div>
<svg class="a" style="left:269px;top:181px" width="8" height="4"><path d="M0 0H8L4 4Z" fill="#111"/></svg>
<div class="a" style="left:16px;top:192px;width:125px;height:20px;background:#f0f0f0;border-top:1px solid #c2c2c2;border-left:1px solid #b8b8b8"></div>
<div class="a" style="left:141px;top:192px;width:140px;height:20px;background:#fff;border-top:1px solid #c2c2c2;border-left:1px solid #c2c2c2"></div>
<div class="a" style="left:34px;top:197px;font-size:11px;color:#1a1a1a">Service date</div>
<svg class="a" style="left:269px;top:200px" width="8" height="4"><path d="M0 0H8L4 4Z" fill="#111"/></svg>
<div class="a" style="left:16px;top:211px;width:125px;height:20px;background:#f0f0f0;border-top:1px solid #c2c2c2;border-left:1px solid #b8b8b8"></div>
<div class="a" style="left:141px;top:211px;width:140px;height:20px;background:#fff;border-top:1px solid #c2c2c2;border-left:1px solid #c2c2c2"></div>
<div class="a" style="left:34px;top:216px;font-size:11px;color:#1a1a1a">Project state</div>
<svg class="a" style="left:269px;top:219px" width="8" height="4"><path d="M0 0H8L4 4Z" fill="#111"/></svg>
<div class="a" style="left:16px;top:230px;width:125px;height:20px;background:#f0f0f0;border-top:1px solid #c2c2c2;border-left:1px solid #b8b8b8"></div>
<div class="a" style="left:141px;top:230px;width:140px;height:20px;background:#fff;border-top:1px solid #c2c2c2;border-left:1px solid #c2c2c2"></div>
<div class="a" style="left:34px;top:235px;font-size:11px;color:#1a1a1a">Project text</div>
<svg class="a" style="left:269px;top:238px" width="8" height="4"><path d="M0 0H8L4 4Z" fill="#111"/></svg>
<div class="a" style="left:16px;top:249px;width:125px;height:20px;background:#f0f0f0;border-top:1px solid #c2c2c2;border-left:1px solid #b8b8b8"></div>
<div class="a" style="left:141px;top:249px;width:140px;height:20px;background:#fff;border-top:1px solid #c2c2c2;border-left:1px solid #c2c2c2"></div>
<div class="a" style="left:34px;top:254px;font-size:11px;color:#1a1a1a">Notes</div>
<svg class="a" style="left:269px;top:257px" width="8" height="4"><path d="M0 0H8L4 4Z" fill="#111"/></svg>
<div class="a" style="left:0;top:268px;width:281px;height:21px;background:#dcdcdc;border-top:1px solid #bcbcbc"></div>
<div class="a" style="left:20px;top:274px;font-size:11px;font-weight:bold;color:#222;letter-spacing:0.4px">Addresses</div>
<svg class="a" style="left:268px;top:276px" width="9" height="6"><path d="M1 5L4.5 1.5L8 5" stroke="#888" stroke-width="1.3" fill="none"/></svg>
<div class="a" style="left:16px;top:289px;width:125px;height:20px;background:#f0f0f0;border-top:1px solid #c2c2c2;border-left:1px solid #b8b8b8"></div>
<div class="a" style="left:141px;top:289px;width:140px;height:20px;background:#fff;border-top:1px solid #c2c2c2;border-left:1px solid #c2c2c2"></div>
<div class="a" style="left:34px;top:294px;font-size:11px;color:#0000ff">Address</div>
<div class="a" style="left:145px;top:294px;font-size:11px;color:#1a1a1a">Customer address</div>
<svg class="a" style="left:269px;top:297px" width="8" height="4"><path d="M0 0H8L4 4Z" fill="#111"/></svg>
<div class="a" style="left:16px;top:308px;width:125px;height:20px;background:#f0f0f0;border-top:1px solid #c2c2c2;border-left:1px solid #b8b8b8"></div>
<div class="a" style="left:141px;top:308px;width:140px;height:20px;background:#fff;border-top:1px solid #c2c2c2;border-left:1px solid #c2c2c2"></div>
<div class="a" style="left:34px;top:313px;font-size:11px;color:#1a1a1a">Name</div>
<div class="a" style="left:145px;top:313px;font-size:11px;color:#1a1a1a">John Doe</div>
<div class="a" style="left:16px;top:327px;width:125px;height:20px;background:#f0f0f0;border-top:1px solid #c2c2c2;border-left:1px solid #b8b8b8"></div>
<div class="a" style="left:141px;top:327px;width:140px;height:20px;background:#fff;border-top:1px solid #c2c2c2;border-left:1px solid #c2c2c2"></div>
<div class="a" style="left:34px;top:332px;font-size:11px;color:#1a1a1a">Street</div>
<div class="a" style="left:145px;top:332px;font-size:11px;color:#1a1a1a">123 Anywhere Street</div>
<div class="a" style="left:16px;top:346px;width:125px;height:20px;background:#f0f0f0;border-top:1px solid #c2c2c2;border-left:1px solid #b8b8b8"></div>
<div class="a" style="left:141px;top:346px;width:140px;height:20px;background:#fff;border-top:1px solid #c2c2c2;border-left:1px solid #c2c2c2"></div>
<div class="a" style="left:34px;top:351px;font-size:11px;color:#1a1a1a">unit</div>
<div class="a" style="left:16px;top:365px;width:125px;height:20px;background:#f0f0f0;border-top:1px solid #c2c2c2;border-left:1px solid #b8b8b8"></div>
<div class="a" style="left:141px;top:365px;width:140px;height:20px;background:#fff;border-top:1px solid #c2c2c2;border-left:1px solid #c2c2c2"></div>
<div class="a" style="left:34px;top:370px;font-size:11px;color:#1a1a1a">Zip</div>
<div class="a" style="left:145px;top:370px;font-size:11px;color:#1a1a1a">12345</div>
<div class="a" style="left:16px;top:384px;width:125px;height:20px;background:#f0f0f0;border-top:1px solid #c2c2c2;border-left:1px solid #b8b8b8"></div>
<div class="a" style="left:141px;top:384px;width:140px;height:20px;background:#fff;border-top:1px solid #c2c2c2;border-left:1px solid #c2c2c2"></div>
<div class="a" style="left:34px;top:389px;font-size:11px;color:#1a1a1a">City</div>
<div class="a" style="left:145px;top:389px;font-size:11px;color:#1a1a1a">Anytown</div>
<div class="a" style="left:16px;top:403px;width:125px;height:20px;background:#f0f0f0;border-top:1px solid #c2c2c2;border-left:1px solid #b8b8b8"></div>
<div class="a" style="left:141px;top:403px;width:140px;height:20px;background:#fff;border-top:1px solid #c2c2c2;border-left:1px solid #c2c2c2"></div>
<div class="a" style="left:34px;top:408px;font-size:11px;color:#1a1a1a">District</div>
<div class="a" style="left:16px;top:422px;width:125px;height:20px;background:#f0f0f0;border-top:1px solid #c2c2c2;border-left:1px solid #b8b8b8"></div>
<div class="a" style="left:141px;top:422px;width:140px;height:20px;background:#fff;border-top:1px solid #c2c2c2;border-left:1px solid #c2c2c2"></div>
<div class="a" style="left:34px;top:427px;font-size:11px;color:#1a1a1a">Country</div>
<div class="a" style="left:16px;top:441px;width:125px;height:20px;background:#f0f0f0;border-top:1px solid #c2c2c2;border-left:1px solid #b8b8b8"></div>
<div class="a" style="left:141px;top:441px;width:140px;height:20px;background:#fff;border-top:1px solid #c2c2c2;border-left:1px solid #c2c2c2"></div>
<div class="a" style="left:34px;top:446px;font-size:11px;color:#1a1a1a">Contact person</div>
<div class="a" style="left:16px;top:460px;width:125px;height:20px;background:#f0f0f0;border-top:1px solid #c2c2c2;border-left:1px solid #b8b8b8"></div>
<div class="a" style="left:141px;top:460px;width:140px;height:20px;background:#fff;border-top:1px solid #c2c2c2;border-left:1px solid #c2c2c2"></div>
<div class="a" style="left:34px;top:465px;font-size:11px;color:#1a1a1a">Phone number</div>
<div class="a" style="left:145px;top:465px;font-size:11px;color:#1a1a1a">+00 123 456 987</div>
<svg class="a" style="left:269px;top:468px" width="8" height="4"><path d="M0 0H8L4 4Z" fill="#111"/></svg>
<div class="a" style="left:16px;top:479px;width:125px;height:20px;background:#f0f0f0;border-top:1px solid #c2c2c2;border-left:1px solid #b8b8b8"></div>
<div class="a" style="left:141px;top:479px;width:140px;height:20px;background:#fff;border-top:1px solid #c2c2c2;border-left:1px solid #c2c2c2"></div>
<div class="a" style="left:34px;top:484px;font-size:11px;color:#1a1a1a">E-Mail</div>
<div class="a" style="left:0;top:498px;width:281px;height:21px;background:#dcdcdc;border-top:1px solid #bcbcbc"></div>
<div class="a" style="left:20px;top:504px;font-size:11px;font-weight:bold;color:#222;letter-spacing:0.4px">Amounts</div>
<svg class="a" style="left:268px;top:506px" width="9" height="6"><path d="M1 5L4.5 1.5L8 5" stroke="#888" stroke-width="1.3" fill="none"/></svg>
<div class="a" style="left:16px;top:519px;width:125px;height:20px;background:#f0f0f0;border-top:1px solid #c2c2c2;border-left:1px solid #b8b8b8"></div>
<div class="a" style="left:141px;top:519px;width:140px;height:20px;background:#fff;border-top:1px solid #c2c2c2;border-left:1px solid #c2c2c2"></div>
<div class="a" style="left:34px;top:524px;font-size:11px;color:#808080">Purchase price</div>
<div class="a" style="right:3px;top:524px;font-size:11px;color:#8c8c8c">€0.00</div>
<div class="a" style="left:16px;top:538px;width:125px;height:20px;background:#f0f0f0;border-top:1px solid #c2c2c2;border-left:1px solid #b8b8b8"></div>
<div class="a" style="left:141px;top:538px;width:140px;height:20px;background:#fff;border-top:1px solid #c2c2c2;border-left:1px solid #c2c2c2"></div>
<div class="a" style="left:34px;top:543px;font-size:11px;color:#0000ff">Net price</div>
<div class="a" style="right:3px;top:543px;font-size:11px;color:#8c8c8c">€100.00</div>
<div class="a" style="left:16px;top:557px;width:125px;height:20px;background:#f0f0f0;border-top:1px solid #c2c2c2;border-left:1px solid #b8b8b8"></div>
<div class="a" style="left:141px;top:557px;width:140px;height:20px;background:#fff;border-top:1px solid #c2c2c2;border-left:1px solid #c2c2c2"></div>
<div class="a" style="left:34px;top:562px;font-size:11px;color:#0000ff">Gross price</div>
<div class="a" style="right:3px;top:562px;font-size:11px;color:#8c8c8c">€119.00</div>
<div class="a" style="left:16px;top:576px;width:125px;height:20px;background:#f0f0f0;border-top:1px solid #c2c2c2;border-left:1px solid #b8b8b8"></div>
<div class="a" style="left:141px;top:576px;width:140px;height:20px;background:#fff;border-top:1px solid #c2c2c2;border-left:1px solid #c2c2c2"></div>
<div class="a" style="left:34px;top:581px;font-size:11px;color:#0000ff">VAT</div>
<div class="a" style="right:3px;top:581px;font-size:11px;color:#8c8c8c">€19.00</div>
<div class="a" style="left:16px;top:595px;width:125px;height:20px;background:#f0f0f0;border-top:1px solid #c2c2c2;border-left:1px solid #b8b8b8"></div>
<div class="a" style="left:141px;top:595px;width:140px;height:20px;background:#fff;border-top:1px solid #c2c2c2;border-left:1px solid #c2c2c2"></div>
<div class="a" style="left:49px;top:600px;font-size:11px;color:#808080">VAT 19%</div>
<div class="a" style="right:3px;top:600px;font-size:11px;color:#8c8c8c">€19.00</div>
<div class="a" style="left:16px;top:614px;width:125px;height:20px;background:#f0f0f0;border-top:1px solid #c2c2c2;border-left:1px solid #b8b8b8"></div>
<div class="a" style="left:141px;top:614px;width:140px;height:20px;background:#fff;border-top:1px solid #c2c2c2;border-left:1px solid #c2c2c2"></div>
<div class="a" style="left:49px;top:619px;font-size:11px;color:#808080">VAT 7%</div>
<div class="a" style="right:3px;top:619px;font-size:11px;color:#8c8c8c">€0.00</div>
<div class="a" style="left:16px;top:633px;width:125px;height:20px;background:#f0f0f0;border-top:1px solid #c2c2c2;border-left:1px solid #b8b8b8"></div>
<div class="a" style="left:141px;top:633px;width:140px;height:20px;background:#fff;border-top:1px solid #c2c2c2;border-left:1px solid #c2c2c2"></div>
<div class="a" style="left:34px;top:638px;font-size:11px;color:#808080">Calculated time</div>
<div class="a" style="right:3px;top:638px;font-size:11px;color:#8c8c8c">0 min</div>
<div class="a" style="left:16px;top:652px;width:125px;height:20px;background:#f0f0f0;border-top:1px solid #c2c2c2;border-left:1px solid #b8b8b8"></div>
<div class="a" style="left:141px;top:652px;width:140px;height:20px;background:#fff;border-top:1px solid #c2c2c2;border-left:1px solid #c2c2c2"></div>
<div class="a" style="left:34px;top:657px;font-size:11px;color:#808080">Commission</div>
<div class="a" style="right:3px;top:657px;font-size:11px;color:#8c8c8c">€0.00</div>
<div class="a" style="left:16px;top:671px;width:125px;height:20px;background:#f0f0f0;border-top:1px solid #c2c2c2;border-left:1px solid #b8b8b8"></div>
<div class="a" style="left:141px;top:671px;width:140px;height:20px;background:#fff;border-top:1px solid #c2c2c2;border-left:1px solid #c2c2c2"></div>
<div class="a" style="left:34px;top:676px;font-size:11px;color:#1a1a1a">Use SP2</div>
<svg class="a" style="left:20px;top:585px" width="7" height="4"><path d="M0 0H7L3.5 4Z" fill="#888"/></svg>
<div class="a" style="left:205px;top:674px;width:13px;height:13px;border:1px solid #999;background:#fff"></div>
</div>
<div class="a" style="left:1579px;top:154px;width:18px;height:681px;background:#f6f6f6"></div>
<svg class="a" style="left:1585px;top:160px" width="8" height="5"><path d="M0 5H8L4 0Z" fill="#777"/></svg>
<svg class="a" style="left:1585px;top:825px" width="8" height="5"><path d="M0 0H8L4 5Z" fill="#777"/></svg>
<div class="a" style="left:1585px;top:171px;width:7px;height:360px;border:1px solid #b5b5b5;border-radius:4px;background:linear-gradient(90deg,#e6e6e6,#d0d0d0)"></div>
<div class="a" style="left:1597px;top:154px;width:1px;height:717px;background:#c4c4c4"></div>
</body></html>
